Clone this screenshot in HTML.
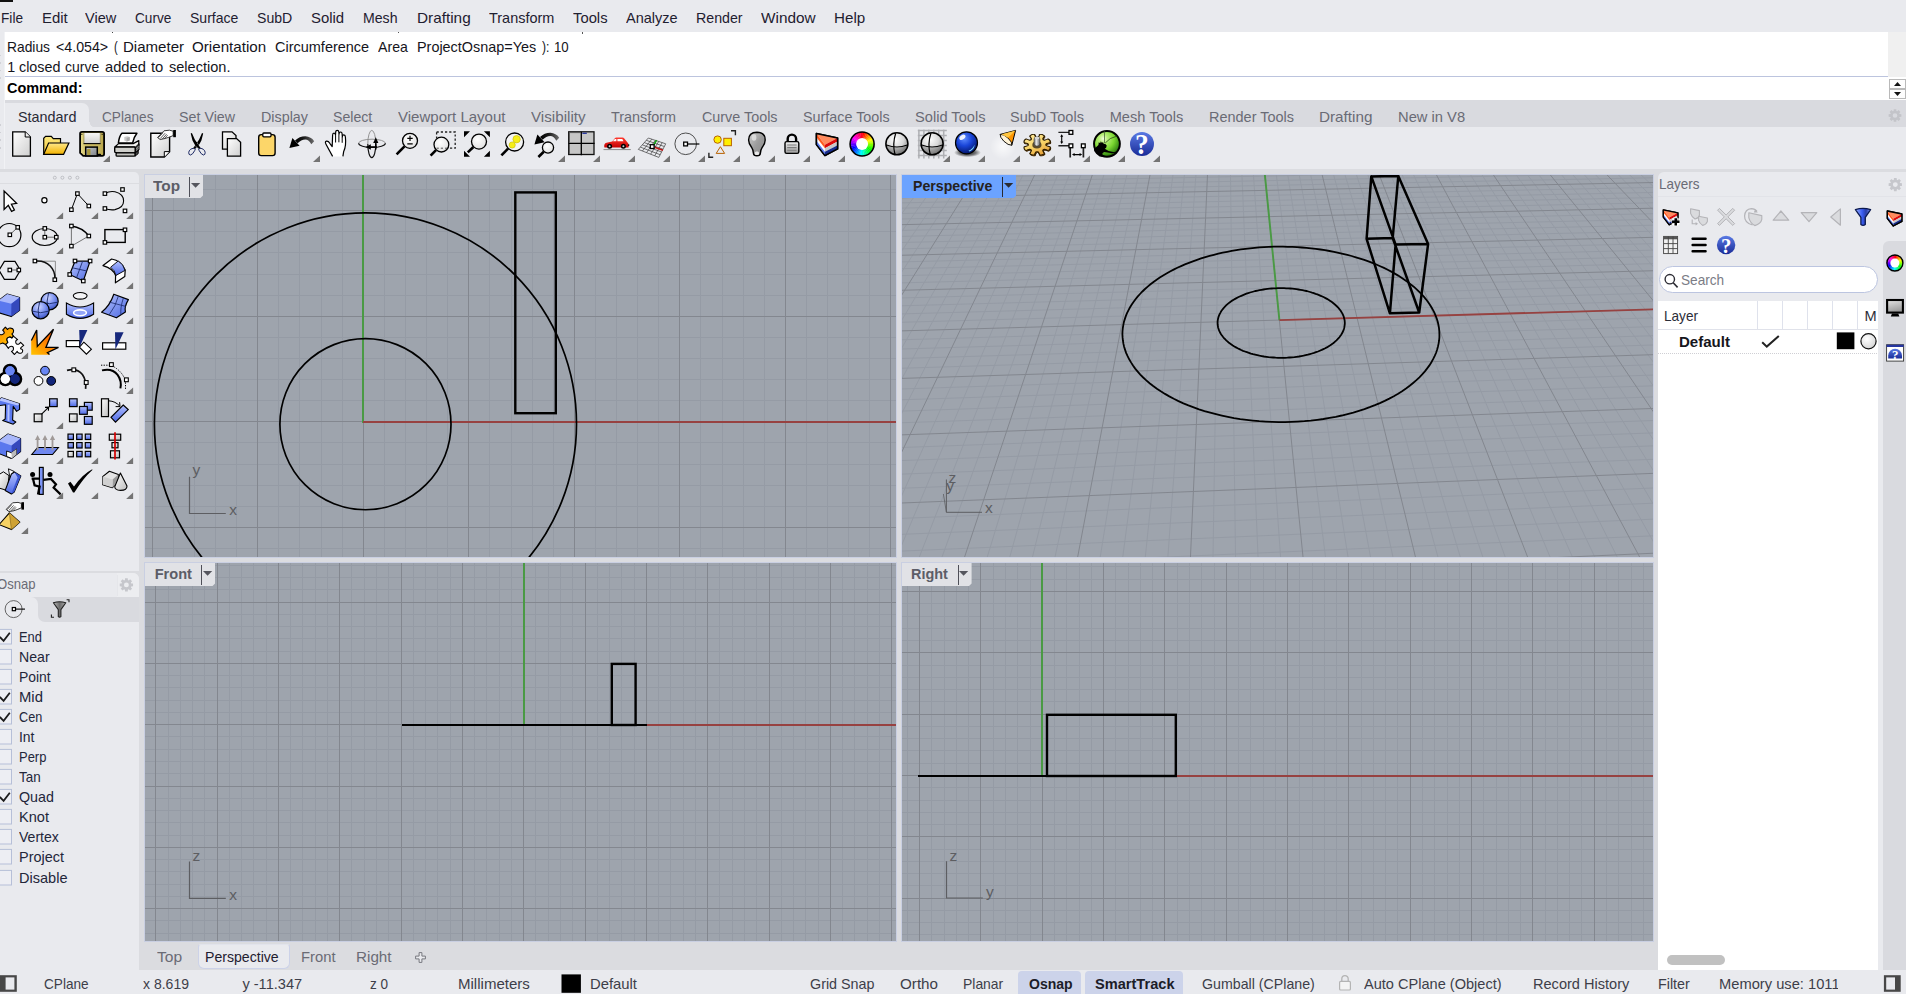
<!DOCTYPE html><html><head><meta charset="utf-8"><title>Rhino</title><style>

*{margin:0;padding:0;box-sizing:border-box}
html,body{width:1906px;height:994px;overflow:hidden;background:#e9eaee;font-family:"Liberation Sans",sans-serif}
body{position:relative}
.a{position:absolute}
.t{position:absolute;white-space:nowrap;transform-origin:0 0;line-height:1}
svg{position:absolute;overflow:visible}

</style></head><body>
<div class="a" style="left:0px;top:0px;width:13px;height:2px;background:#111;"></div>
<div class="t" style="left:0.80px;top:10.64px;font-size:14.6px;color:#1f2030;transform:scaleX(0.9362);">File</div>
<div class="t" style="left:41.50px;top:10.64px;font-size:14.6px;color:#1f2030;transform:scaleX(1.0229);">Edit</div>
<div class="t" style="left:85.40px;top:10.64px;font-size:14.6px;color:#1f2030;transform:scaleX(0.9968);">View</div>
<div class="t" style="left:135.20px;top:10.64px;font-size:14.6px;color:#1f2030;transform:scaleX(0.9333);">Curve</div>
<div class="t" style="left:190.30px;top:10.64px;font-size:14.6px;color:#1f2030;transform:scaleX(0.9628);">Surface</div>
<div class="t" style="left:257.30px;top:10.64px;font-size:14.6px;color:#1f2030;transform:scaleX(0.9671);">SubD</div>
<div class="t" style="left:311.30px;top:10.64px;font-size:14.6px;color:#1f2030;transform:scaleX(1.0215);">Solid</div>
<div class="t" style="left:363.30px;top:10.64px;font-size:14.6px;color:#1f2030;transform:scaleX(0.9678);">Mesh</div>
<div class="t" style="left:416.70px;top:10.64px;font-size:14.6px;color:#1f2030;transform:scaleX(1.0504);">Drafting</div>
<div class="t" style="left:489.30px;top:10.64px;font-size:14.6px;color:#1f2030;transform:scaleX(0.9909);">Transform</div>
<div class="t" style="left:573.20px;top:10.64px;font-size:14.6px;color:#1f2030;transform:scaleX(1.0139);">Tools</div>
<div class="t" style="left:626.20px;top:10.64px;font-size:14.6px;color:#1f2030;transform:scaleX(0.9942);">Analyze</div>
<div class="t" style="left:696.40px;top:10.64px;font-size:14.6px;color:#1f2030;transform:scaleX(0.9734);">Render</div>
<div class="t" style="left:761.20px;top:10.64px;font-size:14.6px;color:#1f2030;transform:scaleX(1.0519);">Window</div>
<div class="t" style="left:834.40px;top:10.64px;font-size:14.6px;color:#1f2030;transform:scaleX(1.0400);">Help</div>
<div class="a" style="left:5px;top:32px;width:1883px;height:44px;background:#fff;"></div>
<div class="a" style="left:5px;top:76px;width:1901px;height:1px;background:#bcc4de;"></div>
<div class="a" style="left:5px;top:77px;width:1901px;height:23px;background:#fff;"></div>
<div class="a" style="left:1888px;top:32px;width:18px;height:45px;background:#f0f0f0;"></div>
<div class="a" style="left:112.3px;top:32px;width:1.2px;height:1.4px;background:#444;"></div>
<div class="a" style="left:397.6px;top:32px;width:1.4px;height:1.2px;background:#555;"></div>
<div class="a" style="left:582.4px;top:32px;width:1px;height:1.6px;background:#555;"></div>
<div class="a" style="left:0px;top:54.6px;width:1.2px;height:1.6px;background:#d2d3d8;"></div>
<div class="a" style="left:0px;top:62.2px;width:1.2px;height:1.6px;background:#d2d3d8;"></div>
<div class="a" style="left:0px;top:69.8px;width:1.2px;height:1.6px;background:#d2d3d8;"></div>
<div class="a" style="left:0px;top:77.4px;width:1.2px;height:1.6px;background:#d2d3d8;"></div>
<div class="a" style="left:0px;top:124.2px;width:1.2px;height:1.6px;background:#cfd0d5;"></div>
<div class="a" style="left:0px;top:131.8px;width:1.2px;height:1.6px;background:#cfd0d5;"></div>
<div class="a" style="left:0px;top:139.4px;width:1.2px;height:1.6px;background:#cfd0d5;"></div>
<div class="a" style="left:0px;top:147.0px;width:1.2px;height:1.6px;background:#cfd0d5;"></div>
<div class="t" style="left:6.60px;top:39.70px;font-size:14.3px;color:#15151c;transform:scaleX(0.9663);">Radius</div>
<div class="t" style="left:55.70px;top:39.70px;font-size:14.3px;color:#15151c;transform:scaleX(0.9943);">&lt;4.054&gt;</div>
<div class="t" style="left:113.90px;top:39.70px;font-size:14.3px;color:#15151c;transform:scaleX(0.7789);">(</div>
<div class="t" style="left:122.50px;top:39.70px;font-size:14.3px;color:#15151c;transform:scaleX(1.0517);">Diameter</div>
<div class="t" style="left:192.30px;top:39.70px;font-size:14.3px;color:#15151c;transform:scaleX(1.0600);">Orientation</div>
<div class="t" style="left:275.20px;top:39.70px;font-size:14.3px;color:#15151c;transform:scaleX(1.0129);">Circumference</div>
<div class="t" style="left:378.40px;top:39.70px;font-size:14.3px;color:#15151c;transform:scaleX(0.9884);">Area</div>
<div class="t" style="left:417.40px;top:39.70px;font-size:14.3px;color:#15151c;transform:scaleX(1.0070);">ProjectOsnap=Yes</div>
<div class="t" style="left:542.30px;top:39.70px;font-size:14.3px;color:#15151c;transform:scaleX(0.8457);">):</div>
<div class="t" style="left:554.10px;top:39.70px;font-size:14.3px;color:#15151c;transform:scaleX(0.9260);">10</div>
<div class="t" style="left:7.20px;top:59.90px;font-size:14.3px;color:#15151c;">1</div>
<div class="t" style="left:18.60px;top:59.90px;font-size:14.3px;color:#15151c;transform:scaleX(1.0030);">closed</div>
<div class="t" style="left:65.30px;top:59.90px;font-size:14.3px;color:#15151c;transform:scaleX(0.9771);">curve</div>
<div class="t" style="left:104.70px;top:59.90px;font-size:14.3px;color:#15151c;transform:scaleX(1.0289);">added</div>
<div class="t" style="left:151.40px;top:59.90px;font-size:14.3px;color:#15151c;transform:scaleX(1.0358);">to</div>
<div class="t" style="left:169.20px;top:59.90px;font-size:14.3px;color:#15151c;transform:scaleX(1.0170);">selection.</div>
<div class="t" style="left:6.50px;top:80.80px;font-size:14.3px;color:#000;font-weight:bold;transform:scaleX(1.0104);">Command:</div>
<div class="a" style="left:1889px;top:79px;width:17px;height:10px;background:#fdfdfd;border:1px solid #b9b9b9"></div>
<div class="a" style="left:1889px;top:89px;width:17px;height:10px;background:#fdfdfd;border:1px solid #b9b9b9"></div>
<svg style="left:1889px;top:79px" width="17" height="20"><path d="M5 7 L8.5 3 L12 7Z M5 13 L8.5 17 L12 13Z" fill="#111"/></svg>
<div class="a" style="left:5px;top:100px;width:1901px;height:27px;background:#d9dadf;"></div>
<div class="a" style="left:5px;top:103px;width:84px;height:24px;background:#e9eaee;border-radius:0 7px 0 0"></div>
<div class="a" style="left:89px;top:121.5px;width:5.5px;height:5.5px;background:radial-gradient(circle at 100% 0,rgba(233,234,238,0) 5px,#e9eaee 5.6px)"></div>
<div class="t" style="left:17.90px;top:109.64px;font-size:14.6px;color:#2a2b36;transform:scaleX(0.9857);">Standard</div>
<div class="t" style="left:102.40px;top:109.64px;font-size:14.6px;color:#6a6b75;transform:scaleX(0.9324);">CPlanes</div>
<div class="t" style="left:179.30px;top:109.64px;font-size:14.6px;color:#6a6b75;transform:scaleX(0.9778);">Set View</div>
<div class="t" style="left:261.20px;top:109.64px;font-size:14.6px;color:#6a6b75;transform:scaleX(0.9813);">Display</div>
<div class="t" style="left:333.40px;top:109.64px;font-size:14.6px;color:#6a6b75;transform:scaleX(0.9674);">Select</div>
<div class="t" style="left:397.90px;top:109.64px;font-size:14.6px;color:#6a6b75;transform:scaleX(1.0299);">Viewport Layout</div>
<div class="t" style="left:530.90px;top:109.64px;font-size:14.6px;color:#6a6b75;transform:scaleX(1.0419);">Visibility</div>
<div class="t" style="left:611.10px;top:109.64px;font-size:14.6px;color:#6a6b75;transform:scaleX(0.9864);">Transform</div>
<div class="t" style="left:701.70px;top:109.64px;font-size:14.6px;color:#6a6b75;transform:scaleX(0.9834);">Curve Tools</div>
<div class="t" style="left:802.80px;top:109.64px;font-size:14.6px;color:#6a6b75;transform:scaleX(0.9824);">Surface Tools</div>
<div class="t" style="left:914.60px;top:109.64px;font-size:14.6px;color:#6a6b75;transform:scaleX(1.0032);">Solid Tools</div>
<div class="t" style="left:1010.30px;top:109.64px;font-size:14.6px;color:#6a6b75;transform:scaleX(0.9936);">SubD Tools</div>
<div class="t" style="left:1109.70px;top:109.64px;font-size:14.6px;color:#6a6b75;">Mesh Tools</div>
<div class="t" style="left:1208.50px;top:109.64px;font-size:14.6px;color:#6a6b75;transform:scaleX(0.9913);">Render Tools</div>
<div class="t" style="left:1318.60px;top:109.64px;font-size:14.6px;color:#6a6b75;transform:scaleX(1.0465);">Drafting</div>
<div class="t" style="left:1397.90px;top:109.64px;font-size:14.6px;color:#6a6b75;transform:scaleX(1.0090);">New in V8</div>
<svg style="left:0;top:0" width="1" height="1"><path d="M1901.37 114.21 L1901.37 116.79 L1899.60 116.92 L1899.25 117.74 L1900.42 119.09 L1898.59 120.92 L1897.24 119.75 L1896.42 120.10 L1896.29 121.87 L1893.71 121.87 L1893.58 120.10 L1892.76 119.75 L1891.41 120.92 L1889.58 119.09 L1890.75 117.74 L1890.40 116.92 L1888.63 116.79 L1888.63 114.21 L1890.40 114.08 L1890.75 113.26 L1889.58 111.91 L1891.41 110.08 L1892.76 111.25 L1893.58 110.90 L1893.71 109.13 L1896.29 109.13 L1896.42 110.90 L1897.24 111.25 L1898.59 110.08 L1900.42 111.91 L1899.25 113.26 L1899.60 114.08Z M1897.34 115.50 A2.34 2.34 0 1 0 1892.66 115.50 A2.34 2.34 0 1 0 1897.34 115.50Z" fill="#c3c4c9" fill-rule="evenodd"/></svg>
<div class="a" style="left:4px;top:32px;width:1px;height:137px;background:#f1f2f5;"></div>
<div class="a" style="left:0px;top:169px;width:1906px;height:801px;background:#dbdce0;"></div>
<svg style="left:0;top:0" width="1906" height="172">
<defs>
<linearGradient id="gFoldB" x1="0" y1="0" x2="0" y2="1"><stop offset="0" stop-color="#fdea80"/><stop offset="1" stop-color="#f2c434"/></linearGradient>
<linearGradient id="gPage" x1="0" y1="0" x2="1" y2="1"><stop offset="0" stop-color="#fff"/><stop offset="1" stop-color="#cfcfcf"/></linearGradient>
<linearGradient id="gFold" x1="0" y1="0" x2="0" y2="1"><stop offset="0" stop-color="#ffe98a"/><stop offset="1" stop-color="#f2b200"/></linearGradient>
<linearGradient id="gGrayV" x1="0" y1="0" x2="0" y2="1"><stop offset="0" stop-color="#f4f4f4"/><stop offset="1" stop-color="#9a9a9a"/></linearGradient>
<radialGradient id="gSph" cx="0.4" cy="0.3" r="0.8"><stop offset="0" stop-color="#fff"/><stop offset="0.5" stop-color="#d8d8d8"/><stop offset="1" stop-color="#777"/></radialGradient>
<radialGradient id="gBlue" cx="0.4" cy="0.3" r="0.75"><stop offset="0" stop-color="#5f8dff"/><stop offset="0.45" stop-color="#1a45d8"/><stop offset="1" stop-color="#00105e"/></radialGradient>
<radialGradient id="gGreen" cx="0.55" cy="0.45" r="0.7"><stop offset="0" stop-color="#b6f46a"/><stop offset="0.6" stop-color="#74c82e"/><stop offset="1" stop-color="#2c6a10"/></radialGradient>
<linearGradient id="gHelp" x1="0" y1="0" x2="0" y2="1"><stop offset="0" stop-color="#5a7ae4"/><stop offset="1" stop-color="#1a2c98"/></linearGradient>
<radialGradient id="gLens" cx="0.4" cy="0.35" r="0.8"><stop offset="0" stop-color="#fff"/><stop offset="1" stop-color="#dcdcdc"/></radialGradient>
<linearGradient id="gBulb" x1="0" y1="0" x2="1" y2="1"><stop offset="0" stop-color="#d0d0d0"/><stop offset="0.5" stop-color="#9c9c9c"/><stop offset="1" stop-color="#8a8a8a"/></linearGradient>
<linearGradient id="gArr" x1="0" y1="0" x2="1" y2="0"><stop offset="0" stop-color="#000"/><stop offset="0.45" stop-color="#1a1a1a"/><stop offset="1" stop-color="#6e6e6e"/></linearGradient>
<linearGradient id="gCar" x1="0" y1="0" x2="0" y2="1"><stop offset="0" stop-color="#ff3a30"/><stop offset="1" stop-color="#c40000"/></linearGradient>
<radialGradient id="gGlow" cx="0.5" cy="0.5" r="0.5"><stop offset="0" stop-color="#fff" stop-opacity="0.75"/><stop offset="1" stop-color="#fff" stop-opacity="0"/></radialGradient>
<radialGradient id="gShadow" cx="0.5" cy="0.5" r="0.5"><stop offset="0" stop-color="#000" stop-opacity="0.9"/><stop offset="0.6" stop-color="#000" stop-opacity="0.5"/><stop offset="1" stop-color="#000" stop-opacity="0"/></radialGradient>
<linearGradient id="gBlueSurf" x1="0" y1="0" x2="1" y2="1"><stop offset="0" stop-color="#b8c6ff"/><stop offset="1" stop-color="#4a66e0"/></linearGradient>
<linearGradient id="gBlueV" x1="0" y1="0" x2="0" y2="1"><stop offset="0" stop-color="#b4c2ff"/><stop offset="1" stop-color="#4c68e6"/></linearGradient>
<radialGradient id="gBlueSp" cx="0.4" cy="0.3" r="0.8"><stop offset="0" stop-color="#d0d8ff"/><stop offset="0.5" stop-color="#7a90f0"/><stop offset="1" stop-color="#2c44b8"/></radialGradient>
<linearGradient id="gOrange" x1="0" y1="1" x2="1" y2="0"><stop offset="0" stop-color="#ffc400"/><stop offset="0.45" stop-color="#ff8a00"/><stop offset="1" stop-color="#ff4000"/></linearGradient>
<linearGradient id="gWhiteG" x1="0" y1="0" x2="1" y2="1"><stop offset="0" stop-color="#fff"/><stop offset="1" stop-color="#bdbdbd"/></linearGradient>
</defs>
<path d="M103.0 161.9 H110.0 V155.4Z" fill="#747474"/>
<path d="M313.0 161.9 H320.0 V155.4Z" fill="#747474"/>
<path d="M558.0 161.9 H565.0 V155.4Z" fill="#747474"/>
<path d="M593.0 161.9 H600.0 V155.4Z" fill="#747474"/>
<path d="M628.0 161.9 H635.0 V155.4Z" fill="#747474"/>
<path d="M663.0 161.9 H670.0 V155.4Z" fill="#747474"/>
<path d="M698.0 161.9 H705.0 V155.4Z" fill="#747474"/>
<path d="M733.0 161.9 H740.0 V155.4Z" fill="#747474"/>
<path d="M768.0 161.9 H775.0 V155.4Z" fill="#747474"/>
<path d="M803.0 161.9 H810.0 V155.4Z" fill="#747474"/>
<path d="M838.0 161.9 H845.0 V155.4Z" fill="#747474"/>
<path d="M873.0 161.9 H880.0 V155.4Z" fill="#747474"/>
<path d="M943.0 161.9 H950.0 V155.4Z" fill="#747474"/>
<path d="M978.0 161.9 H985.0 V155.4Z" fill="#747474"/>
<path d="M1013.0 161.9 H1020.0 V155.4Z" fill="#747474"/>
<path d="M1048.0 161.9 H1055.0 V155.4Z" fill="#747474"/>
<path d="M1083.0 161.9 H1090.0 V155.4Z" fill="#747474"/>
<path d="M1118.0 161.9 H1125.0 V155.4Z" fill="#747474"/>
<path d="M1153.0 161.9 H1160.0 V155.4Z" fill="#747474"/>
<path d="M12.7 131.8 H25.2 L30.4 137 V156.1 H12.7Z" fill="url(#gPage)" stroke="#000" stroke-width="1.3"/><path d="M25.2 131.8 V137 H30.4" fill="#eee" stroke="#000" stroke-width="1"/>
<path d="M43.7 154.2 V138.2 L45.6 136.4 H51.3 L53.3 138.6 H60.5 V143" fill="url(#gFoldB)" stroke="#000" stroke-width="1.2"/><path d="M43.7 154.3 L48.6 143 H68.9 L63.6 154.3Z" fill="url(#gFold)" stroke="#000" stroke-width="1.2"/>
<defs><linearGradient id="gGold" x1="0" y1="0" x2="1" y2="0"><stop offset="0" stop-color="#e6da8c"/><stop offset="0.25" stop-color="#cdbd66"/><stop offset="0.8" stop-color="#c6b45c"/><stop offset="1" stop-color="#b4a248"/></linearGradient><linearGradient id="gLbl" x1="0" y1="0" x2="0" y2="1"><stop offset="0" stop-color="#f6f6f6"/><stop offset="1" stop-color="#cfcfcf"/></linearGradient><linearGradient id="gShut" x1="0" y1="0" x2="1" y2="1"><stop offset="0" stop-color="#c4c8cc"/><stop offset="1" stop-color="#7c8084"/></linearGradient></defs>
<path d="M82 131.9 H102.2 Q104.1 131.9 104.1 133.8 V154 Q104.1 155.9 102.2 155.9 H100.2 V154.6 H98.6 V155.9 H83.2 L80.1 152.9 V133.8 Q80.1 131.9 82 131.9Z" fill="url(#gGold)" stroke="#000" stroke-width="1.8" stroke-linejoin="round"/><rect x="83.7" y="133" width="16.8" height="10.6" fill="url(#gLbl)"/><path d="M83.5 143.6 H100.7" stroke="#000" stroke-width="1.1"/><path d="M83.9 133 V143.2 M100.3 133 V143.2" stroke="#8a7c30" stroke-width="0.7"/><path d="M81.2 134.3 h1.2 M101.6 134.3 h1.2" stroke="#000" stroke-width="0.9"/><rect x="85.7" y="147.1" width="11.6" height="8.8" fill="url(#gShut)" stroke="#000" stroke-width="1.5"/><rect x="87.1" y="149" width="3.4" height="6" fill="#a6963a"/>
<path d="M118.4 143 Q119.2 136 121.9 133.2 H136.9 Q133.8 137 132.6 143Z" fill="#fff" stroke="#000" stroke-width="1.5" stroke-linejoin="round"/><path d="M124.3 137 L127.4 136.2 L129.7 137 V140.6 L126.6 141.5 L124.3 140.6Z" fill="#c9c9c9"/><path d="M126.6 137.9 L129.7 137 V140.6 L126.6 141.5Z" fill="#a8a8a8"/><path d="M114.8 147 L118.6 143.6 H133.2 L138.8 140.6 V145.4 L135.2 148.4 V147Z" fill="#f2f2f0" stroke="#000" stroke-width="1.2" stroke-linejoin="round"/><path d="M135.2 147.4 L139 143.6 V150 L135.2 152.8Z" fill="#4a4a4a" stroke="#000" stroke-width="1"/><path d="M135.6 149.4 L138.8 146.4 M135.6 151 L138.8 148" stroke="#bbb" stroke-width="0.6"/><rect x="114.7" y="147" width="20.5" height="5.6" rx="1" fill="#cfcfcb" stroke="#000" stroke-width="1.4"/><path d="M135 153.2 L138.2 150.6 V153.6 L135 156.2Z" fill="#4a4a4a" stroke="#000" stroke-width="1"/><rect x="116.1" y="152.8" width="18.9" height="3.4" rx="1" fill="#c2c2be" stroke="#000" stroke-width="1.3"/>
<path d="M150.8 133.3 H169.6 V151.6 L164.3 157 H150.8Z" fill="url(#gPage)" stroke="#000" stroke-width="1.4"/><path d="M164.3 157 V151.6 H169.6" fill="#fff" stroke="#000" stroke-width="1"/><path d="M157.5 137.5 L164 130.8 L169.5 130.2 L173.2 131.2 V135.6 L168.8 137.3 L165 138.5 L160.2 139.5Z" fill="#fff" stroke="#222" stroke-width="0.9"/><path d="M158.3 137.8 L163.2 132.6 M160.2 138.6 L165.1 133.2 M162.3 138.9 L166.6 134.2 M164.3 138.7 L167.6 135.2" stroke="#333" stroke-width="0.8"/><rect x="173.2" y="130" width="2.7" height="7.2" fill="#000"/>
<path d="M190.70 133.50 L191.90 133.00 L194.80 139.40 L198.50 145.00 L200.60 148.00 L199.60 148.90 L195.50 145.90 L192.50 140.40Z M203.20 133.50 L202.00 133.00 L199.10 139.40 L195.40 145.00 L193.30 148.00 L194.30 148.90 L198.40 145.90 L201.40 140.40ZM196.95 141.8 L199 145.4 L196.95 148 L194.9 145.4Z" fill="#000"/><path d="M199.8 148.2 Q204.6 148.6 205.2 152.6 Q205.2 155 203.4 155 Q201.2 154.6 199.2 150.6 L198.4 148.4" fill="none" stroke="#0e1a58" stroke-width="0.95"/><path d="M194.1 148.2 Q189.3 148.6 188.7 152.6 Q188.7 155 190.5 155 Q192.7 154.6 194.7 150.6 L195.5 148.4" fill="none" stroke="#0e1a58" stroke-width="0.95"/>
<path d="M222.5 131.8 H232 L236 135.6 V149.2 H222.5Z" fill="url(#gPage)" stroke="#000" stroke-width="1.3"/><path d="M227.4 138.6 H236.6 L240.6 142.4 V156.1 H227.4Z" fill="url(#gPage)" stroke="#000" stroke-width="1.3"/>
<rect x="258.7" y="134.6" width="16.4" height="21" rx="2.6" fill="#fcd669" stroke="#000" stroke-width="1.4"/><rect x="262.8" y="133" width="8.2" height="3.8" rx="1" fill="#fff" stroke="#000" stroke-width="1.3"/>
<path d="M295.0 140.6 Q299.6 136.2 305.5 136.3 Q311.0 136.6 314.2 141.2 L311.3 144.2 Q309.0 139.6 305.3 139.4 Q301.2 139.4 297.6 143.2Z" fill="url(#gArr)"/><path d="M289.4 147.9 L292.4 138.0 L299.6 145.7Z" fill="#000"/>
<path d="M332.6 156.4 L326 144.3 Q324.6 141.6 326.5 141.2 Q328.3 140.9 329.8 143.3 L332.2 146.6 L332.6 135.2 Q332.6 133.2 334 133.2 Q335.4 133.2 335.5 135.2 L335.7 131.9 Q335.8 130.3 337.2 130.3 Q338.7 130.3 338.8 131.9 L339 134.2 Q339.1 132 340.6 132 Q342 132 342.1 133.8 L342.3 136.8 Q342.6 134.8 343.9 134.9 Q345.3 135 345.4 137 Q346.4 146 343.7 151.4 L342.9 156.4" fill="#fff" stroke="#000" stroke-width="1.2" stroke-linejoin="round"/><path d="M335.6 135.4 V142.5 M338.9 134.5 V142.3 M342.2 137 V142.8" stroke="#000" stroke-width="1"/>
<path d="M358.6 143.3 A13.4 4.1 0 0 1 385.4 143.3" fill="none" stroke="#8a8a8a" stroke-width="0.9"/><path d="M385.4 143.3 A13.4 4.1 0 0 1 358.6 143.3" fill="none" stroke="#111" stroke-width="1.2"/><path d="M367.8 144 A4 13.6 0 0 1 375.8 144" fill="none" stroke="#8a8a8a" stroke-width="0.9"/><path d="M375.8 144 A4 13.6 0 0 1 367.8 144" fill="none" stroke="#111" stroke-width="1.2"/><path d="M375.8 149.4 V141.5" stroke="#000" stroke-width="1.5"/><path d="M373.2 142.9 L375.8 137.2 L378.4 142.9Z" fill="#000"/><path d="M377 147 H369.5" stroke="#000" stroke-width="1.5"/><path d="M370.8 144.3 L365.5 147 L370.8 149.7Z" fill="#000"/>
<line x1="404.53" y1="146.36" x2="396.60" y2="154.40" stroke="#000" stroke-width="2.6"/><circle cx="410" cy="140.8" r="7.5" fill="url(#gLens)" stroke="#000" stroke-width="1.3"/>
<path d="M407.3 138.3 H412.7 M410 135.7 V140.9 M407.3 143.8 H412.7" stroke="#000" stroke-width="1.2"/>
<rect x="436.6" y="132" width="18.6" height="16.2" fill="none" stroke="#222" stroke-width="1.3" stroke-dasharray="2.2 2"/>
<line x1="436.01" y1="150.09" x2="430.60" y2="155.60" stroke="#000" stroke-width="2.6"/><circle cx="441.4" cy="144.6" r="7.4" fill="url(#gLens)" stroke="#000" stroke-width="1.3"/>
<path d="M436.6 148.2 H447.5" stroke="#555" stroke-width="1" stroke-dasharray="2.2 2"/>
<path d="M464 131.2 H470 L464 137.2Z M489.9 131.2 V137.2 L483.9 131.2Z M464 156.7 V150.7 L470 156.7Z M489.9 156.7 H483.9 L489.9 150.7Z" fill="#000"/>
<line x1="473.39" y1="147.01" x2="467.80" y2="152.40" stroke="#000" stroke-width="2.6"/><circle cx="479" cy="141.6" r="7.5" fill="url(#gLens)" stroke="#000" stroke-width="1.3"/>
<line x1="508.07" y1="148.63" x2="501.40" y2="155.40" stroke="#000" stroke-width="2.6"/><circle cx="514.6" cy="142" r="9" fill="#f4f4f4" stroke="#000" stroke-width="1.3"/>
<circle cx="516.6" cy="139.2" r="3.7" fill="#f6ee18" stroke="#c8be00" stroke-width="0.6"/><circle cx="512.2" cy="145" r="3.1" fill="#f6ee18" stroke="#c8be00" stroke-width="0.6"/>
<path d="M540.0 137.1 Q544.6 132.7 550.5 132.8 Q556.0 133.1 559.2 137.7 L556.3 140.7 Q554.0 136.1 550.3 135.9 Q546.2 135.9 542.6 139.7Z" fill="url(#gArr)"/><path d="M534.4 144.4 L537.4 134.5 L544.6 142.2Z" fill="#000"/>
<line x1="543.78" y1="151.73" x2="538.40" y2="157.00" stroke="#000" stroke-width="2.6"/><circle cx="548" cy="147.6" r="5.6" fill="url(#gLens)" stroke="#000" stroke-width="1.3"/>
<rect x="568.7" y="131.8" width="25.3" height="22.7" fill="#c6c6c6" stroke="#111" stroke-width="1.3"/><path d="M581.3 131.8 V155.2 M568.7 143.3 H594.6" stroke="#000" stroke-width="1.3"/><path d="M569.4 132.6 H580.6 M569.4 132.6 V142.6 M569.4 144.1 V153.8" stroke="#555" stroke-width="0.9"/><rect x="582.4" y="132.7" width="4.4" height="1.2" fill="#1c2c9c"/>
<path d="M603.5 149.6 H630.8" stroke="#8d8d8d" stroke-width="1"/><path d="M604.3 147 Q603.7 143.6 606.5 142.8 L612.3 141.4 L614.8 138.3 Q615.3 137.6 616.3 137.6 H622.6 Q623.6 137.6 624.3 138.4 L627.3 142.3 Q628.6 143.3 628.6 145.2 V147 Q628.6 147.6 628 147.6 H605 Q604.3 147.6 604.3 147Z" fill="url(#gCar)"/><path d="M612.8 141.2 L614.9 139 H616.4 V141.2Z M617.4 139 H622.3 L623.5 141.2 H617.4Z" fill="#fff"/><circle cx="609.6" cy="146.3" r="2.5" fill="#000"/><circle cx="609.6" cy="146.3" r="1" fill="#ccc"/><circle cx="623.4" cy="146.3" r="2.5" fill="#000"/><circle cx="623.4" cy="146.3" r="1" fill="#ccc"/><path d="M628.2 144.2 h1 v1.8 h-1z" fill="#000"/>
<path d="M648.3 138.0 L638.3 149.4 M648.3 138.0 L665.7 143.8 M651.8 139.2 L642.4 151.0 M646.3 140.3 L664.3 146.5 M655.3 140.3 L646.5 152.6 M644.3 142.6 L662.9 149.2 M658.7 141.5 L650.6 154.2 M642.3 144.8 L661.6 152.0 M662.2 142.6 L654.7 155.8 M640.3 147.1 L660.2 154.7 M665.7 143.8 L658.8 157.4 M638.3 149.4 L658.8 157.4 " stroke="#3c3c3c" stroke-width="0.7" fill="none"/>
<path d="M653.6 145.2 L656.6 140.2" stroke="#12a012" stroke-width="1.6"/><path d="M654.6 147.2 L663 150.2" stroke="#c01818" stroke-width="1.6"/><rect x="650.30" y="144.70" width="3.8" height="3.8" fill="#fff" stroke="#000" stroke-width="1.3"/>
<circle cx="685.7" cy="143.8" r="10.8" fill="none" stroke="#3c3c3c" stroke-width="0.9"/><path d="M688 144 H699.4" stroke="#000" stroke-width="1.2"/><rect x="683.70" y="142.10" width="3.8" height="3.8" fill="#fff" stroke="#000" stroke-width="1.3"/>
<circle cx="717.6" cy="139.6" r="3.7" fill="#ffef00" stroke="#b86200" stroke-width="1"/><rect x="723.8" y="138.3" width="7.6" height="7.4" fill="#ffef00" stroke="#b86200" stroke-width="1"/><path d="M716.2 153.4 L720.4 146.7 L724.6 153.4Z" fill="none" stroke="#b86200" stroke-width="1"/><path d="M731 130.7 H735.4 V135.2 M708.9 152.8 V157.2 H713.2" fill="none" stroke="#222" stroke-width="1.4"/>
<path d="M756.9 132.2 Q765.2 132.4 765.2 140 Q765.2 143.5 762.3 147.2 Q760.6 149.8 760.4 153.2 Q760.2 155.8 756.9 155.8 Q753.6 155.8 753.4 153.2 Q753.2 149.8 751.5 147.2 Q748.6 143.5 748.6 140 Q748.6 132.4 756.9 132.2Z" fill="url(#gBulb)" stroke="#000" stroke-width="1.4"/><ellipse cx="754" cy="137.5" rx="2.4" ry="3.2" fill="#e4e4e4" opacity="0.8"/><rect x="754.8" y="151.5" width="4.2" height="3.4" rx="1.5" fill="#e8e8e8"/>
<path d="M787.7 142 V138.8 A4.2 4.2 0 0 1 796.1 138.8 V142" fill="none" stroke="#000" stroke-width="2.4"/><rect x="785" y="141.6" width="13.8" height="11.8" rx="1.6" fill="url(#gGrayV)" stroke="#000" stroke-width="1.4"/><path d="M787.2 145 H796.6 M787.2 147.6 H796.6 M787.2 150.2 H796.6" stroke="#7c7c7c" stroke-width="1.1"/>
<path d="M816.4 133.6 L837.6 138 L837.6 148.9 L824.9 155.6 L816.4 144.6Z" fill="#fff" stroke="#000" stroke-width="1.5" stroke-linejoin="round"/><path d="M816.4 133.6 L837.6 138 L824.9 144.8Z" fill="#ff8b5e"/><path d="M816.4 133.6 L824.9 144.8 V148.2 L816.4 137.2Z" fill="#ff5a1e"/><path d="M824.9 144.8 L837.6 138 V141.6 L824.9 148.2Z" fill="#dc0a0a"/><path d="M824.9 148.2 L837.6 141.6 V145.2 L824.9 151.8Z" fill="#c8c8c8"/><path d="M816.4 140.8 L824.9 151.8 V155.6 L816.4 144.6Z" fill="#5a7af0"/><path d="M824.9 151.8 L837.6 145.2 V148.9 L824.9 155.6Z" fill="#182c8c"/><path d="M816.4 133.6 L837.6 138 L837.6 148.9 L824.9 155.6 L816.4 144.6Z" fill="none" stroke="#000" stroke-width="1.5" stroke-linejoin="round"/>
<path d="M862.1 144 L862.10 132.00 A12.0 12.0 0 0 1 864.49 132.24Z" fill="hsl(0,100%,50%)"/><path d="M862.1 144 L864.18 132.18 A12.0 12.0 0 0 1 866.50 132.83Z" fill="hsl(10,100%,50%)"/><path d="M862.1 144 L866.20 132.72 A12.0 12.0 0 0 1 868.37 133.77Z" fill="hsl(20,100%,50%)"/><path d="M862.1 144 L868.10 133.61 A12.0 12.0 0 0 1 870.05 135.01Z" fill="hsl(30,100%,50%)"/><path d="M862.1 144 L869.81 134.81 A12.0 12.0 0 0 1 871.49 136.53Z" fill="hsl(40,100%,50%)"/><path d="M862.1 144 L871.29 136.29 A12.0 12.0 0 0 1 872.65 138.27Z" fill="hsl(50,100%,50%)"/><path d="M862.1 144 L872.49 138.00 A12.0 12.0 0 0 1 873.48 140.19Z" fill="hsl(60,100%,50%)"/><path d="M862.1 144 L873.38 139.90 A12.0 12.0 0 0 1 873.97 142.23Z" fill="hsl(70,100%,50%)"/><path d="M862.1 144 L873.92 141.92 A12.0 12.0 0 0 1 874.10 144.31Z" fill="hsl(80,100%,50%)"/><path d="M862.1 144 L874.10 144.00 A12.0 12.0 0 0 1 873.86 146.39Z" fill="hsl(90,100%,50%)"/><path d="M862.1 144 L873.92 146.08 A12.0 12.0 0 0 1 873.27 148.40Z" fill="hsl(100,100%,50%)"/><path d="M862.1 144 L873.38 148.10 A12.0 12.0 0 0 1 872.33 150.27Z" fill="hsl(110,100%,50%)"/><path d="M862.1 144 L872.49 150.00 A12.0 12.0 0 0 1 871.09 151.95Z" fill="hsl(120,100%,50%)"/><path d="M862.1 144 L871.29 151.71 A12.0 12.0 0 0 1 869.57 153.39Z" fill="hsl(130,100%,50%)"/><path d="M862.1 144 L869.81 153.19 A12.0 12.0 0 0 1 867.83 154.55Z" fill="hsl(140,100%,50%)"/><path d="M862.1 144 L868.10 154.39 A12.0 12.0 0 0 1 865.91 155.38Z" fill="hsl(150,100%,50%)"/><path d="M862.1 144 L866.20 155.28 A12.0 12.0 0 0 1 863.87 155.87Z" fill="hsl(160,100%,50%)"/><path d="M862.1 144 L864.18 155.82 A12.0 12.0 0 0 1 861.79 156.00Z" fill="hsl(170,100%,50%)"/><path d="M862.1 144 L862.10 156.00 A12.0 12.0 0 0 1 859.71 155.76Z" fill="hsl(180,100%,50%)"/><path d="M862.1 144 L860.02 155.82 A12.0 12.0 0 0 1 857.70 155.17Z" fill="hsl(190,100%,50%)"/><path d="M862.1 144 L858.00 155.28 A12.0 12.0 0 0 1 855.83 154.23Z" fill="hsl(200,100%,50%)"/><path d="M862.1 144 L856.10 154.39 A12.0 12.0 0 0 1 854.15 152.99Z" fill="hsl(210,100%,50%)"/><path d="M862.1 144 L854.39 153.19 A12.0 12.0 0 0 1 852.71 151.47Z" fill="hsl(220,100%,50%)"/><path d="M862.1 144 L852.91 151.71 A12.0 12.0 0 0 1 851.55 149.73Z" fill="hsl(230,100%,50%)"/><path d="M862.1 144 L851.71 150.00 A12.0 12.0 0 0 1 850.72 147.81Z" fill="hsl(240,100%,50%)"/><path d="M862.1 144 L850.82 148.10 A12.0 12.0 0 0 1 850.23 145.77Z" fill="hsl(250,100%,50%)"/><path d="M862.1 144 L850.28 146.08 A12.0 12.0 0 0 1 850.10 143.69Z" fill="hsl(260,100%,50%)"/><path d="M862.1 144 L850.10 144.00 A12.0 12.0 0 0 1 850.34 141.61Z" fill="hsl(270,100%,50%)"/><path d="M862.1 144 L850.28 141.92 A12.0 12.0 0 0 1 850.93 139.60Z" fill="hsl(280,100%,50%)"/><path d="M862.1 144 L850.82 139.90 A12.0 12.0 0 0 1 851.87 137.73Z" fill="hsl(290,100%,50%)"/><path d="M862.1 144 L851.71 138.00 A12.0 12.0 0 0 1 853.11 136.05Z" fill="hsl(300,100%,50%)"/><path d="M862.1 144 L852.91 136.29 A12.0 12.0 0 0 1 854.63 134.61Z" fill="hsl(310,100%,50%)"/><path d="M862.1 144 L854.39 134.81 A12.0 12.0 0 0 1 856.37 133.45Z" fill="hsl(320,100%,50%)"/><path d="M862.1 144 L856.10 133.61 A12.0 12.0 0 0 1 858.29 132.62Z" fill="hsl(330,100%,50%)"/><path d="M862.1 144 L858.00 132.72 A12.0 12.0 0 0 1 860.33 132.13Z" fill="hsl(340,100%,50%)"/><path d="M862.1 144 L860.02 132.18 A12.0 12.0 0 0 1 862.41 132.00Z" fill="hsl(350,100%,50%)"/><circle cx="862.1" cy="144" r="6.0" fill="#fff"/><circle cx="862.1" cy="144" r="12.0" fill="none" stroke="#000" stroke-width="1.6"/>
<circle cx="896.9" cy="143.8" r="11" fill="url(#gSph)" stroke="#000" stroke-width="1.6"/><path d="M886.5 145.0 Q896.9 149.0 907.3 145.0" fill="none" stroke="#000" stroke-width="1.2"/><path d="M895.7 133.2 Q892.3 143.8 894.9 154.2" fill="none" stroke="#000" stroke-width="1.2"/><path d="M886.8 145.4 Q896.9 149.4 907.0 145.4 A10.2 10.2 0 0 1 886.8 145.4Z" fill="#000" opacity="0.18"/>
<path d="M918.9 129.4 V158.4 M917.8 130.6 H946.8 M923.9 129.4 V158.4 M917.8 135.6 H946.8 M928.8 129.4 V158.4 M917.8 140.5 H946.8 M933.8 129.4 V158.4 M917.8 145.5 H946.8 M938.7 129.4 V158.4 M917.8 150.4 H946.8 M943.7 129.4 V158.4 M917.8 155.4 H946.8 " stroke="#aeafb3" stroke-width="1.5" fill="none"/>
<circle cx="932.1" cy="143.8" r="11" fill="url(#gSph)" stroke="#000" stroke-width="1.6"/><path d="M921.7 145.0 Q932.1 149.0 942.5 145.0" fill="none" stroke="#000" stroke-width="1.2"/><path d="M930.9 133.2 Q927.5 143.8 930.1 154.2" fill="none" stroke="#000" stroke-width="1.2"/><path d="M922.0 145.4 Q932.1 149.4 942.2 145.4 A10.2 10.2 0 0 1 922.0 145.4Z" fill="#000" opacity="0.18"/>
<ellipse cx="967.5" cy="152.6" rx="13.5" ry="4.6" fill="url(#gShadow)"/><circle cx="966.5" cy="142.8" r="11" fill="url(#gBlue)" stroke="#000" stroke-width="1.2"/><ellipse cx="962.4" cy="137.3" rx="3.4" ry="2.2" transform="rotate(-35 962.4 137.3)" fill="#fff" opacity="0.9"/><path d="M968.5 150.8 Q973 148.8 974.6 144.5 Q974.4 149.6 969.5 151.4Z" fill="#7fe0ff"/>
<circle cx="1003" cy="146.5" r="13" fill="url(#gGlow)"/><path d="M1015.6 130.4 L1000.2 134.4 Q1003 142 1011.8 145.2Z" fill="#ff9500" stroke="#000" stroke-width="1"/><path d="M1000.2 134.4 Q1003.4 133.8 1008.2 138.2 Q1012.6 142.6 1011.8 145.2 Q1008.4 145.6 1003.8 141.2 Q999.6 136.8 1000.2 134.4Z" fill="#fff3d6" stroke="#000" stroke-width="0.9"/><path d="M1015.6 130.4 L1001.5 134.3 L1008 137.8Z" fill="#ffc640"/>
<defs><linearGradient id="gGear" x1="0" y1="0" x2="0.6" y2="1"><stop offset="0" stop-color="#fdeaa0"/><stop offset="0.6" stop-color="#f8d468"/><stop offset="1" stop-color="#e8a43c"/></linearGradient></defs><path d="M8.34 1.03 L10.70 2.09 Q12.41 1.53 11.64 4.82 Q9.85 7.69 9.04 6.09 L6.62 5.17 Q5.35 5.35 5.17 6.62 L6.09 9.04 Q7.69 9.85 4.82 11.64 Q1.53 12.41 2.09 10.70 L1.03 8.34 Q0.00 7.56 -1.03 8.34 L-2.09 10.70 Q-1.53 12.41 -4.82 11.64 Q-7.69 9.85 -6.09 9.04 L-5.17 6.62 Q-5.35 5.35 -6.62 5.17 L-9.04 6.09 Q-9.85 7.69 -11.64 4.82 Q-12.41 1.53 -10.70 2.09 L-8.34 1.03 Q-7.56 0.00 -8.34 -1.03 L-10.70 -2.09 Q-12.41 -1.53 -11.64 -4.82 Q-9.85 -7.69 -9.04 -6.09 L-6.62 -5.17 Q-5.35 -5.35 -5.17 -6.62 L-6.09 -9.04 Q-7.69 -9.85 -4.82 -11.64 Q-1.53 -12.41 -2.09 -10.70 L-1.03 -8.34 Q-0.00 -7.56 1.03 -8.34 L2.09 -10.70 Q1.53 -12.41 4.82 -11.64 Q7.69 -9.85 6.09 -9.04 L5.17 -6.62 Q5.35 -5.35 6.62 -5.17 L9.04 -6.09 Q9.85 -7.69 11.64 -4.82 Q12.41 -1.53 10.70 -2.09 L8.34 -1.03 Q7.56 -0.00 8.34 1.03 Z" transform="translate(1037.6 145.5) scale(1.1 0.87)" fill="#b8640e" stroke="#3a2400" stroke-width="1"/><path d="M8.34 1.03 L10.70 2.09 Q12.41 1.53 11.64 4.82 Q9.85 7.69 9.04 6.09 L6.62 5.17 Q5.35 5.35 5.17 6.62 L6.09 9.04 Q7.69 9.85 4.82 11.64 Q1.53 12.41 2.09 10.70 L1.03 8.34 Q0.00 7.56 -1.03 8.34 L-2.09 10.70 Q-1.53 12.41 -4.82 11.64 Q-7.69 9.85 -6.09 9.04 L-5.17 6.62 Q-5.35 5.35 -6.62 5.17 L-9.04 6.09 Q-9.85 7.69 -11.64 4.82 Q-12.41 1.53 -10.70 2.09 L-8.34 1.03 Q-7.56 0.00 -8.34 -1.03 L-10.70 -2.09 Q-12.41 -1.53 -11.64 -4.82 Q-9.85 -7.69 -9.04 -6.09 L-6.62 -5.17 Q-5.35 -5.35 -5.17 -6.62 L-6.09 -9.04 Q-7.69 -9.85 -4.82 -11.64 Q-1.53 -12.41 -2.09 -10.70 L-1.03 -8.34 Q-0.00 -7.56 1.03 -8.34 L2.09 -10.70 Q1.53 -12.41 4.82 -11.64 Q7.69 -9.85 6.09 -9.04 L5.17 -6.62 Q5.35 -5.35 6.62 -5.17 L9.04 -6.09 Q9.85 -7.69 11.64 -4.82 Q12.41 -1.53 10.70 -2.09 L8.34 -1.03 Q7.56 -0.00 8.34 1.03 Z" transform="translate(1037.1 144.70000000000002) scale(1.1 0.87)" fill="url(#gGear)" stroke="#2a1c00" stroke-width="1.1" stroke-linejoin="round"/><ellipse cx="1036.8999999999999" cy="145.0" rx="4.6" ry="3.4" fill="#5a4a2a"/><rect x="1034.1" y="136.8" width="5.8" height="9.2" rx="2.5" fill="url(#gCyl)" stroke="#444" stroke-width="0.7"/><defs><linearGradient id="gCyl" x1="0" y1="0" x2="1" y2="0"><stop offset="0" stop-color="#777"/><stop offset="0.4" stop-color="#e4e4e4"/><stop offset="1" stop-color="#6a6a6a"/></linearGradient></defs><ellipse cx="1037.0" cy="138.0" rx="2.4" ry="1.2" fill="#d6d6d6"/>
<path d="M1058.4 132.4 H1069 M1058.4 145.8 H1069" stroke="#222" stroke-width="1.4"/><path d="M1070.2 148 V157.6 M1083.4 148 V157.6" stroke="#222" stroke-width="1.7"/><rect x="1069.00" y="130.50" width="3.8" height="3.8" fill="#fff" stroke="#000" stroke-width="1.3"/><rect x="1069.00" y="143.90" width="3.8" height="3.8" fill="#fff" stroke="#000" stroke-width="1.3"/><rect x="1081.40" y="143.90" width="3.8" height="3.8" fill="#fff" stroke="#000" stroke-width="1.3"/><path d="M1061.7 135.8 V142.4 M1073.5 154.6 H1080.6" stroke="#000" stroke-width="1.1"/><path d="M1060.2 136.8 L1061.7 134.2 L1063.2 136.8Z M1060.2 141.4 L1061.7 144 L1063.2 141.4Z M1074.6 153.1 L1072 154.6 L1074.6 156.1Z M1079.6 153.1 L1082.2 154.6 L1079.6 156.1Z" fill="#000"/>
<defs><radialGradient id="gGH" cx="0.36" cy="0.3" r="0.75"><stop offset="0" stop-color="#f4fce0"/><stop offset="0.22" stop-color="#b8ee78"/><stop offset="0.55" stop-color="#7cd832"/><stop offset="0.85" stop-color="#3e9416"/><stop offset="1" stop-color="#1c4c08"/></radialGradient></defs><circle cx="1106.95" cy="143.85" r="12.9" fill="url(#gGH)" stroke="#000" stroke-width="2"/><path d="M1104.5 131.4 V143" stroke="#4a6a3a" stroke-width="0.8"/><path d="M1105.2 143 Q1109.6 137.6 1116.6 136.2" stroke="#2c4a1c" stroke-width="0.8" fill="none"/><path d="M1094.4 147.6 Q1096.6 157 1106.4 156.6 Q1100.6 154.6 1100 151.6Z" fill="#000"/><path d="M1093.92 149.23 L1098.45 144.98 L1098.74 142.15 L1100.15 143.28 L1100.83 141.18 L1101.97 143.00 L1102.99 142.03 L1103.67 143.68 L1105.37 143.90 L1106.73 145.60 L1106.16 147.87 L1104.80 148.78 L1108.65 150.93 L1114.32 152.35 L1115.56 151.50 L1116.13 152.63 L1112.05 153.31 L1107.52 152.46 L1104.12 151.89 L1102.53 153.20 L1101.97 155.69 L1104.69 157.05 L1099.59 156.59 L1096.19 153.76 L1094.20 150.93Z" fill="#000"/>
<circle cx="1142" cy="143.9" r="12" fill="url(#gHelp)"/>
</svg>
<div class="t" style="left:1134.9px;top:130.1px;font-family:'Liberation Serif',serif;font-weight:bold;font-size:29.5px;color:#fff;transform:scaleX(0.93)">?</div>
<div class="a" style="left:0px;top:172px;width:139.3px;height:399px;background:#e9eaee;border-radius:0 5px 0 0"></div>
<div class="a" style="left:0px;top:183px;width:139.3px;height:1px;background:#dcdde1;"></div>
<svg style="left:0;top:0" width="145" height="560">
<circle cx="54.8" cy="177.7" r="1.5" fill="none" stroke="#b4b5ba" stroke-width="0.8"/>
<circle cx="62.4" cy="177.7" r="1.5" fill="none" stroke="#b4b5ba" stroke-width="0.8"/>
<circle cx="69.9" cy="177.7" r="1.5" fill="none" stroke="#b4b5ba" stroke-width="0.8"/>
<circle cx="77.4" cy="177.7" r="1.5" fill="none" stroke="#b4b5ba" stroke-width="0.8"/>
<path d="M56.1 219.0 H63.1 V212.4Z" fill="#747474"/>
<path d="M91.1 219.0 H98.1 V212.4Z" fill="#747474"/>
<path d="M126.1 219.0 H133.1 V212.4Z" fill="#747474"/>
<path d="M21.1 254.0 H28.1 V247.4Z" fill="#747474"/>
<path d="M56.1 254.0 H63.1 V247.4Z" fill="#747474"/>
<path d="M91.1 254.0 H98.1 V247.4Z" fill="#747474"/>
<path d="M126.1 254.0 H133.1 V247.4Z" fill="#747474"/>
<path d="M21.1 289.0 H28.1 V282.4Z" fill="#747474"/>
<path d="M56.1 289.0 H63.1 V282.4Z" fill="#747474"/>
<path d="M91.1 289.0 H98.1 V282.4Z" fill="#747474"/>
<path d="M126.1 289.0 H133.1 V282.4Z" fill="#747474"/>
<path d="M21.1 324.0 H28.1 V317.4Z" fill="#747474"/>
<path d="M56.1 324.0 H63.1 V317.4Z" fill="#747474"/>
<path d="M91.1 324.0 H98.1 V317.4Z" fill="#747474"/>
<path d="M126.1 324.0 H133.1 V317.4Z" fill="#747474"/>
<path d="M21.1 359.0 H28.1 V352.4Z" fill="#747474"/>
<path d="M21.1 394.0 H28.1 V387.4Z" fill="#747474"/>
<path d="M126.1 394.0 H133.1 V387.4Z" fill="#747474"/>
<path d="M56.1 429.0 H63.1 V422.4Z" fill="#747474"/>
<path d="M21.1 464.0 H28.1 V457.4Z" fill="#747474"/>
<path d="M56.1 464.0 H63.1 V457.4Z" fill="#747474"/>
<path d="M91.1 464.0 H98.1 V457.4Z" fill="#747474"/>
<path d="M126.1 464.0 H133.1 V457.4Z" fill="#747474"/>
<path d="M21.1 499.0 H28.1 V492.4Z" fill="#747474"/>
<path d="M56.1 499.0 H63.1 V492.4Z" fill="#747474"/>
<path d="M91.1 499.0 H98.1 V492.4Z" fill="#747474"/>
<path d="M126.1 499.0 H133.1 V492.4Z" fill="#747474"/>
<path d="M21.1 534.0 H28.1 V527.4Z" fill="#747474"/>
<path d="M4.1 191 V209.4 L8.3 205.4 L11.6 211.4 L14.4 210 L11.4 204.2 L16.6 203.4Z" fill="#fff" stroke="#000" stroke-width="1.3" stroke-linejoin="miter"/>
<circle cx="44.4" cy="200.3" r="2.6" fill="#fff" stroke="#000" stroke-width="1.2"/>
<path d="M71.4 209.7 L77.4 193.6 L88.8 206" fill="none" stroke="#000" stroke-width="1"/><rect x="75.65" y="191.85" width="3.5" height="3.5" fill="#fff" stroke="#000" stroke-width="1.15"/><rect x="87.05" y="204.25" width="3.5" height="3.5" fill="#fff" stroke="#000" stroke-width="1.15"/><rect x="69.65" y="207.95" width="3.5" height="3.5" fill="#fff" stroke="#000" stroke-width="1.15"/>
<path d="M104.9 193.6 Q110 190.6 115 191.8 Q123.6 194 123.6 201 Q123.6 207.6 115 209.6 Q110 210.4 104.9 208.5" fill="none" stroke="#000" stroke-width="1.1"/><rect x="103.15" y="191.85" width="3.5" height="3.5" fill="#fff" stroke="#000" stroke-width="1.15"/><rect x="120.75" y="187.75" width="3.5" height="3.5" fill="#fff" stroke="#000" stroke-width="1.15"/><rect x="103.15" y="206.75" width="3.5" height="3.5" fill="#fff" stroke="#000" stroke-width="1.15"/><rect x="123.25" y="209.15" width="3.5" height="3.5" fill="#fff" stroke="#000" stroke-width="1.15"/>
<circle cx="9.3" cy="235.1" r="11.6" fill="none" stroke="#000" stroke-width="1.2"/><path d="M9.8 234.8 L17.7 227.3" stroke="#444" stroke-width="0.8"/><rect x="8.05" y="233.05" width="3.5" height="3.5" fill="#fff" stroke="#000" stroke-width="1.15"/><rect x="15.95" y="225.55" width="3.5" height="3.5" fill="#fff" stroke="#000" stroke-width="1.15"/>
<ellipse cx="44.8" cy="237" rx="12.6" ry="8.5" fill="none" stroke="#000" stroke-width="1.2"/><path d="M44.8 228.4 V237.2 H56.3" fill="none" stroke="#444" stroke-width="0.8"/><rect x="43.05" y="226.65" width="3.5" height="3.5" fill="#fff" stroke="#000" stroke-width="1.15"/><rect x="43.05" y="235.45" width="3.5" height="3.5" fill="#fff" stroke="#000" stroke-width="1.15"/><rect x="54.55" y="235.45" width="3.5" height="3.5" fill="#fff" stroke="#000" stroke-width="1.15"/>
<path d="M71.4 226 V246.1 L88.8 236" fill="none" stroke="#555" stroke-width="0.8"/><path d="M71.4 226 Q82.5 227.5 88.8 236" fill="none" stroke="#000" stroke-width="1.3"/><rect x="69.65" y="224.25" width="3.5" height="3.5" fill="#fff" stroke="#000" stroke-width="1.15"/><rect x="87.05" y="234.25" width="3.5" height="3.5" fill="#fff" stroke="#000" stroke-width="1.15"/><rect x="69.65" y="244.35" width="3.5" height="3.5" fill="#fff" stroke="#000" stroke-width="1.15"/>
<rect x="104.9" y="229.6" width="20.3" height="12.8" fill="none" stroke="#000" stroke-width="1.4"/><rect x="123.25" y="228.05" width="3.5" height="3.5" fill="#fff" stroke="#000" stroke-width="1.15"/><rect x="103.15" y="240.65" width="3.5" height="3.5" fill="#fff" stroke="#000" stroke-width="1.15"/>
<path d="M-1 270.3 L4.4 261.4 H15 L20.4 270.3 L15 279.3 H4.4Z" fill="none" stroke="#000" stroke-width="1.2"/><path d="M9.8 270 H18.8" stroke="#444" stroke-width="0.8"/><rect x="8.05" y="268.25" width="3.5" height="3.5" fill="#fff" stroke="#000" stroke-width="1.15"/><rect x="17.05" y="268.25" width="3.5" height="3.5" fill="#fff" stroke="#000" stroke-width="1.15"/>
<path d="M36 261.2 H55.4 V278" fill="none" stroke="#777" stroke-width="0.8"/><path d="M36.4 261 Q45 260.6 50.2 266 Q55 271 54.9 278" fill="none" stroke="#111" stroke-width="1.6"/><rect x="33.15" y="259.25" width="3.5" height="3.5" fill="#fff" stroke="#000" stroke-width="1.15"/><rect x="53.05" y="277.95" width="3.5" height="3.5" fill="#fff" stroke="#000" stroke-width="1.15"/>
<path d="M75 261.2 L90.1 261.2 L83.3 281 L69.7 274.5Z" fill="url(#gBlueSurf)" stroke="#000" stroke-width="1.2"/><path d="M82.6 261.2 L76.5 277.8 M72.4 267.8 L86.8 271" stroke="#1a2a6c" stroke-width="0.9"/><rect x="73.25" y="259.25" width="3.5" height="3.5" fill="#fff" stroke="#000" stroke-width="1.15"/><rect x="88.35" y="259.25" width="3.5" height="3.5" fill="#fff" stroke="#000" stroke-width="1.15"/><rect x="67.95" y="272.75" width="3.5" height="3.5" fill="#fff" stroke="#000" stroke-width="1.15"/><rect x="81.55" y="279.25" width="3.5" height="3.5" fill="#fff" stroke="#000" stroke-width="1.15"/>
<path d="M103 265.6 L111.6 259 Q121.2 260.4 125.2 270 L124.8 276.4 L115.4 282.8 L115.6 275.6 Q113.4 268.6 103 265.6Z" fill="#fff" stroke="#000" stroke-width="1.2" stroke-linejoin="round"/><path d="M110.6 267.2 L118.2 261 Q123.6 264 125 270.4 L116 275.4 Q114.8 270.2 110.6 267.2Z" fill="url(#gBlueV)" stroke="#000" stroke-width="0.9"/>
<path d="M-1.5 300.5 L7.2 294 L19.6 297.6 V310.4 L11.2 316.6 L-1.5 312.6Z" fill="#5a78ee" stroke="#000" stroke-width="1.1" stroke-linejoin="round"/><path d="M-1.5 300.5 L7.2 294 L19.6 297.6 L11.4 303.8Z" fill="#a9b8fb"/><path d="M11.4 303.8 L19.6 297.6 V310.4 L11.2 316.6Z" fill="#3448bc"/>
<circle cx="49.6" cy="301.2" r="8.6" fill="url(#gBlueSp)" stroke="#000" stroke-width="1.2"/><path d="M41.5 302.2 Q49.6 305.2 57.7 302.2 M48.6 293.0 Q46.0 301.2 48.0 309.3" fill="none" stroke="#1a2a6c" stroke-width="0.9"/><circle cx="40.6" cy="310.2" r="8.6" fill="url(#gBlueSp)" stroke="#000" stroke-width="1.2"/><path d="M32.5 311.2 Q40.6 314.2 48.7 311.2 M39.6 302.0 Q37.0 310.2 39.0 318.3" fill="none" stroke="#1a2a6c" stroke-width="0.9"/>
<ellipse cx="80.2" cy="295.8" rx="6.9" ry="3.3" fill="#f4f4f6" stroke="#000" stroke-width="1.1"/><path d="M66.4 303 Q80 311 93.6 303 V314.2 Q80 322.6 66.4 314.2Z" fill="url(#gBlueV)" stroke="#000" stroke-width="1.1"/><ellipse cx="80" cy="312.8" rx="6.4" ry="2.9" fill="#93a6f8" stroke="#fff" stroke-width="1.6"/>
<path d="M113.8 294.2 L128.4 299.6 Q124 307 125.4 312 L116.4 317.8 L101.6 312.2 Q110 305.6 113.8 294.2Z" fill="url(#gBlueSurf)" stroke="#000" stroke-width="1.2" stroke-linejoin="round"/><path d="M108.8 302 L125.8 306.4 M118.4 296 Q116 306 109 315 M123.4 298 Q120 308 121 315" stroke="#1a2a6c" stroke-width="0.8" fill="none"/>
<path d="M5.35 327.2 L7.6 329.5 Q8.6 327.6 10.7 328.1 Q13.2 328.4 13.5 330.2 Q13.9 332.6 11.9 333.9 L13.4 336.1 L11.9 338.1 Q10.6 336.6 8.8 337.3 Q6.6 338 6.9 339.6 Q7.2 341.2 7.9 342.3 L5.7 344.6 L2.7 343 L-1 344.4 V334.2 Q1.2 335 2.3 334.6 Q4.6 333.8 4.2 332.3 Q3.8 330.8 2.7 330.2Z" fill="url(#gOrange2)" stroke="#000" stroke-width="1.1" stroke-linejoin="round"/><defs><linearGradient id="gOrange2" x1="0" y1="0" x2="1" y2="1"><stop offset="0" stop-color="#ff8c00"/><stop offset="1" stop-color="#ffc800"/></linearGradient></defs><path d="M13.4 336.1 L17.6 339.6 Q15.6 340.4 15.7 341.6 Q15.6 343.4 16.6 343.9 Q17.8 344.6 18.9 344.1 Q19.8 343.6 20.6 342.3 L23.7 345.3 L21.4 347.2 Q20.4 347.8 20.6 348.8 Q22.6 349.2 22.7 350.6 Q22.8 352.4 21.4 353 Q19.8 353.6 18.7 353 Q17.4 352.4 17.2 351.4 L14.5 354.5 L11.5 351.4 Q13.2 350.8 13.4 349.5 Q13.7 347.8 13 346.9 Q12 345.8 10.3 346.5 Q9 347 8.4 348.4 L5.7 344.6 L7.9 342.3 Q7.2 341.2 6.9 339.6 Q6.6 338 8.8 337.3 Q10.6 336.6 11.9 338.1Z" fill="#fff" stroke="#000" stroke-width="1.1" stroke-linejoin="round"/>
<path d="M31.2 340.7 L36.7 330 L37.3 346.5 L53.5 329.3 L45.9 347.4 H58.5 L47.4 352.6 L49.7 354.7 H31.2Z" fill="url(#gOrange)"/><path d="M31.4 340.5 L36.7 330 L37.3 346.5 L53.5 329.3 L45.9 347.4 H58.5 L47.4 352.6 L49.5 354.5" fill="none" stroke="#000" stroke-width="1.3" stroke-linejoin="miter"/>
<rect x="66.3" y="340.6" width="13.4" height="6" fill="#fff" stroke="#000" stroke-width="1.2"/><path d="M83.8 342.2 L91.4 349.2 L86.4 354.2 L79.4 347.2Z" fill="#fff" stroke="#000" stroke-width="1.1"/><path d="M79.2 330 H87.4 L79.8 346.6Z" fill="#16287c"/>
<rect x="102.6" y="342.8" width="23.2" height="6.4" fill="#fff" stroke="#000" stroke-width="1.2"/><path d="M115 332.2 H123.6 L115.4 349.6Z" fill="#16287c"/>
<circle cx="10" cy="371" r="6" fill="#6886f4" stroke="#000" stroke-width="2.6"/><circle cx="5.4" cy="379" r="6" fill="#fff" stroke="#000" stroke-width="2.6"/><circle cx="15" cy="379" r="6" fill="#12257a" stroke="#000" stroke-width="2.6"/><circle cx="10" cy="371" r="4.7" fill="#6886f4"/><circle cx="5.4" cy="379" r="4.7" fill="#fff"/><circle cx="15" cy="379" r="4.7" fill="#12257a"/>
<circle cx="45" cy="370.7" r="4.4" fill="#6886f4" stroke="#000" stroke-width="1"/><circle cx="38.5" cy="380.9" r="4.4" fill="#fff" stroke="#000" stroke-width="1"/><circle cx="51.2" cy="380.9" r="4.4" fill="#12257a" stroke="#000" stroke-width="1"/>
<path d="M67 370.4 Q77 367.6 82.4 374.6 Q86.6 380.6 85.6 388.8" fill="none" stroke="#111" stroke-width="1.7"/><rect x="71.90" y="367.90" width="3.8" height="3.8" fill="#fff" stroke="#000" stroke-width="1.1"/><rect x="84.30" y="380.60" width="3.8" height="3.8" fill="#fff" stroke="#000" stroke-width="1.1"/>
<path d="M102 370.4 Q112 367.8 117.6 374.8 Q122 380.8 120.4 388.4" fill="none" stroke="#000" stroke-width="2"/><path d="M101 365.2 H109 M113.6 366.6 Q121 371 124.4 378 M125.5 382.4 V390" fill="none" stroke="#000" stroke-width="1" stroke-dasharray="1.3 1.3"/><rect x="109.50" y="362.70" width="3.8" height="3.8" fill="#fff" stroke="#000" stroke-width="1.1"/><rect x="124.50" y="377.90" width="3.8" height="3.8" fill="#fff" stroke="#000" stroke-width="1.1"/>
<path d="M-1 400.4 L1.4 397.8 L19.6 403.8 V409.4 L16.6 411.4 L13.2 406.4 L12.6 420 L15.8 422 L13.2 424.2 L2.6 420.6 L5.2 419 L5.6 404.8 L-1 405.6Z" fill="#5a78ee" stroke="#000" stroke-width="1.1" stroke-linejoin="round"/><path d="M-1 400.4 L1.4 397.8 L19.6 403.8 L17.6 405.6Z" fill="#b4c2ff"/><path d="M7.6 405 L9.6 404.6 L9.4 421.4 L7.4 420.6Z" fill="#b4c2ff"/>
<rect x="34.2" y="413.9" width="7.8" height="7.8" fill="url(#gWhiteG)" stroke="#000" stroke-width="1.2"/><rect x="49.6" y="398.8" width="7.6" height="7.8" fill="url(#gBlueV)" stroke="#000" stroke-width="1.2"/><path d="M41.6 414.2 L48 407.8" stroke="#000" stroke-width="1.1"/><path d="M45 407.4 L48.6 407.2 L48.4 410.8" fill="none" stroke="#000" stroke-width="1.1"/>
<rect x="69.5" y="398.8" width="7.6" height="7.8" fill="url(#gBlueV)" stroke="#000" stroke-width="1.2"/><rect x="69.5" y="413.9" width="7.6" height="7.8" fill="url(#gWhiteG)" stroke="#000" stroke-width="1.2"/><rect x="84.4" y="402.4" width="7.8" height="7.8" fill="url(#gBlueV)" stroke="#000" stroke-width="1.2"/><rect x="79.5" y="406.5" width="7.8" height="7.8" fill="url(#gBlueV)" stroke="#000" stroke-width="1.2"/><rect x="84.4" y="416.5" width="7.8" height="7.8" fill="url(#gBlueV)" stroke="#000" stroke-width="1.2"/>
<rect x="101.5" y="398.8" width="7" height="17.8" fill="url(#gWhiteG)" stroke="#000" stroke-width="1.2"/><path d="M123.2 405 L128.2 409.6 L115.5 422.2 L111 417.3Z" fill="url(#gBlueV)" stroke="#000" stroke-width="1.2"/><path d="M108.7 400.8 Q115.6 401.2 119.8 406.2" fill="none" stroke="#000" stroke-width="1"/><path d="M115.6 406.6 L120 406.6 L119.6 402.2" fill="none" stroke="#000" stroke-width="1"/>
<path d="M-1.5 441 L8 434 L20.6 438.6 V451.6 L11.6 458.4 L-1.5 453.4Z" fill="#5a78ee" stroke="#000" stroke-width="1.1" stroke-linejoin="round"/><path d="M-1.5 441 L8 434 L20.6 438.6 L11.6 445.4Z" fill="#a9b8fb"/><path d="M11.6 445.4 L20.6 438.6 V451.6 L11.6 458.4Z" fill="#3448bc"/><path d="M6.6 451 L11.6 452.8 L16.4 449 V454.6 L11.6 458.4 L6.6 456.4Z" fill="#fff" stroke="#000" stroke-width="0.9"/><path d="M11.6 452.8 L16.4 449 V454.6 L11.6 458.4Z" fill="#bbb"/>
<path d="M31.8 454.5 H52.5 L58.4 447.5 H37.6Z" fill="#7088f0" stroke="#000" stroke-width="1.1"/><path d="M37.6 450.2 V439 M45 450.2 V439 M52.5 450.2 V439" stroke="#a09a98" stroke-width="1.8"/><path d="M35 440 L37.6 435 L40.2 440Z M42.4 440 L45 435 L47.6 440Z M49.9 440 L52.5 435 L55.1 440Z" fill="#a09a98"/>
<rect x="68.0" y="434.1" width="5.4" height="5.4" fill="url(#gBlueV)" stroke="#000" stroke-width="1.2"/>
<rect x="68.0" y="442.6" width="5.4" height="5.4" fill="url(#gBlueV)" stroke="#000" stroke-width="1.2"/>
<rect x="68.0" y="451.4" width="5.4" height="5.4" fill="url(#gWhiteG)" stroke="#000" stroke-width="1.2"/>
<rect x="76.7" y="434.1" width="5.4" height="5.4" fill="url(#gBlueV)" stroke="#000" stroke-width="1.2"/>
<rect x="76.7" y="442.6" width="5.4" height="5.4" fill="url(#gBlueV)" stroke="#000" stroke-width="1.2"/>
<rect x="76.7" y="451.4" width="5.4" height="5.4" fill="url(#gBlueV)" stroke="#000" stroke-width="1.2"/>
<rect x="85.3" y="434.1" width="5.4" height="5.4" fill="url(#gBlueV)" stroke="#000" stroke-width="1.2"/>
<rect x="85.3" y="442.6" width="5.4" height="5.4" fill="url(#gBlueV)" stroke="#000" stroke-width="1.2"/>
<rect x="85.3" y="451.4" width="5.4" height="5.4" fill="url(#gBlueV)" stroke="#000" stroke-width="1.2"/>
<rect x="109.3" y="434.2" width="11.4" height="6" fill="url(#gWhiteG)" stroke="#000" stroke-width="1.2"/><rect x="112" y="442.6" width="6" height="5.2" fill="url(#gWhiteG)" stroke="#000" stroke-width="1.2"/><rect x="110.5" y="450.8" width="9" height="7" fill="url(#gWhiteG)" stroke="#000" stroke-width="1.2"/><path d="M115 432.2 V459.6" stroke="#d40000" stroke-width="1.7"/>
<path d="M8.4 468.8 L14 471.4 L10 478Z" fill="#fff" stroke="#000" stroke-width="0.9"/><path d="M-1 474.6 L3.4 471.8 L9 475.6 L7.4 490.6 L-1 488Z" fill="url(#gWhiteG)" stroke="#000" stroke-width="1"/><path d="M11.4 474 L14.4 472 L20.8 476 L14.2 492 L11.4 494 L5.2 490.4Z" fill="url(#gBlueV)" stroke="#000" stroke-width="1.1" stroke-linejoin="round"/><path d="M14.4 472 L20.8 476 L14.2 492 L11.4 494 L17.6 477.4Z" fill="#3a54d0"/>
<rect x="39.4" y="467.4" width="3.8" height="27" fill="#7c94f6" stroke="#000" stroke-width="1.2"/><circle cx="32.6" cy="474.4" r="2.5" fill="#000"/><circle cx="50" cy="474.4" r="2.5" fill="#000"/><path d="M31.6 478.6 H39.6 M33 478.8 L34.6 485.4 L39.6 486.6 L38 494.6" fill="none" stroke="#000" stroke-width="2.3"/><path d="M43.4 479.8 L51 479 L56 484.4 L53.6 487.6 L60.6 494.4" fill="none" stroke="#000" stroke-width="2.2"/>
<path d="M68 483.4 L70.4 481.8 L74 486.6 Q82 474.6 92.2 469.2 L92.4 470 Q83 478.4 74.4 492.6 L73 492.4Z" fill="#000"/>
<path d="M102.6 476.6 L109.4 471.2 L118.4 474.6 V482 L112.4 487.6 L102.6 484.6Z" fill="#e4e4e4" stroke="#000" stroke-width="1.1" stroke-linejoin="round"/><path d="M112.6 479.6 L118.4 474.6 V482 L112.4 487.6Z" fill="#9a9a9a"/><path d="M102.6 476.6 L112.6 479.6 L112.4 487.6 L102.6 484.6Z" fill="#d0d0d0"/><path d="M120.4 473 L127 486 Q127 490.4 120.6 490.4 Q114.6 490 114.8 486.6Z" fill="url(#gWhiteG)" stroke="#000" stroke-width="1.1" stroke-linejoin="round"/>
<path d="M6.2 509.4 L12.6 502.8 L18 502.4 L21.4 503.4 V507.8 L17.2 509.6 L13.6 510.8 L8.8 511.6Z" fill="#fff" stroke="#222" stroke-width="0.9"/><path d="M7 509.8 L11.8 504.6 M8.8 510.6 L13.6 505.4 M10.8 511 L15 506.4 M12.8 510.8 L16 507.4" stroke="#333" stroke-width="0.8"/><rect x="21.4" y="502.2" width="2.6" height="7.4" fill="#000"/><path d="M9.4 512.8 L19.8 522.2 L11.4 529.6 L-1 524.6Z" fill="#f6d264" stroke="#000" stroke-width="1.1" stroke-linejoin="round"/><path d="M9.4 512.8 L19.8 522.2 L11.4 529.6Z" fill="#cfa234"/><path d="M9.4 512.8 L11.4 529.6" stroke="#7a5a10" stroke-width="0.6"/>
</svg>
<div class="a" style="left:0px;top:573.3px;width:139.3px;height:396.7px;background:#e9eaee;border-radius:0 6px 0 0"></div>
<div class="a" style="left:117px;top:573.3px;width:22.3px;height:24px;background:#ecedf0;border-radius:0 6px 0 0"></div>
<div class="a" style="left:116.6px;top:575px;width:1px;height:21px;background:#e5e6ea;"></div>
<div class="t" style="left:-2.80px;top:577.04px;font-size:14.6px;color:#6a6b75;transform:scaleX(0.8977);">Osnap</div>
<svg style="left:0;top:0" width="1" height="1"><path d="M133.06 583.55 L133.06 586.25 L131.21 586.39 L130.85 587.25 L132.07 588.66 L130.16 590.57 L128.75 589.35 L127.89 589.71 L127.75 591.56 L125.05 591.56 L124.91 589.71 L124.05 589.35 L122.64 590.57 L120.73 588.66 L121.95 587.25 L121.59 586.39 L119.74 586.25 L119.74 583.55 L121.59 583.41 L121.95 582.55 L120.73 581.14 L122.64 579.23 L124.05 580.45 L124.91 580.09 L125.05 578.24 L127.75 578.24 L127.89 580.09 L128.75 580.45 L130.16 579.23 L132.07 581.14 L130.85 582.55 L131.21 583.41Z M128.85 584.90 A2.45 2.45 0 1 0 123.95 584.90 A2.45 2.45 0 1 0 128.85 584.90Z" fill="#c6c7cc" fill-rule="evenodd"/></svg>
<div class="a" style="left:30px;top:597.2px;width:10px;height:10px;background:#d9dadf;"></div>
<div class="a" style="left:0px;top:597.2px;width:38px;height:24.6px;background:#e9eaee;border-radius:0 7px 0 0"></div>
<div class="a" style="left:38px;top:597.2px;width:101.3px;height:24.6px;background:#d9dadf;border-radius:0 0 0 7px"></div>
<svg style="left:0;top:590px" width="140" height="40"><circle cx="13.6" cy="19.1" r="8.5" fill="none" stroke="#555" stroke-width="0.9"/><path d="M15.6 19.1 H25" stroke="#000" stroke-width="1.1"/><rect x="12.30" y="17.50" width="3.2" height="3.2" fill="#fff" stroke="#000" stroke-width="1.2"/><defs><linearGradient id="gFun" x1="0" y1="0" x2="1" y2="0"><stop offset="0" stop-color="#b8b8b8"/><stop offset="0.5" stop-color="#6c6c6c"/><stop offset="1" stop-color="#a8a8a8"/></linearGradient></defs><path d="M53.4 12.8 Q59.6 10.6 65.8 12.8 L60.9 19.6 V26.6 Q59.6 27.8 58.3 26.6 V19.6Z" fill="url(#gFun)" stroke="#222" stroke-width="1.1" stroke-linejoin="round"/><path d="M66.6 9.8 H69 V12.2 M51.4 24.6 V27.2 H54" fill="none" stroke="#222" stroke-width="1.1"/></svg>
<div class="t" style="left:19.00px;top:630.14px;font-size:14.6px;color:#23263a;transform:scaleX(0.8846);">End</div>
<div class="t" style="left:19.00px;top:650.14px;font-size:14.6px;color:#23263a;transform:scaleX(0.9676);">Near</div>
<div class="t" style="left:19.00px;top:670.14px;font-size:14.6px;color:#23263a;transform:scaleX(0.9534);">Point</div>
<div class="t" style="left:19.00px;top:690.14px;font-size:14.6px;color:#23263a;transform:scaleX(1.0170);">Mid</div>
<div class="t" style="left:19.00px;top:710.14px;font-size:14.6px;color:#23263a;transform:scaleX(0.8673);">Cen</div>
<div class="t" style="left:19.00px;top:730.14px;font-size:14.6px;color:#23263a;transform:scaleX(0.9538);">Int</div>
<div class="t" style="left:19.00px;top:750.14px;font-size:14.6px;color:#23263a;transform:scaleX(0.8874);">Perp</div>
<div class="t" style="left:19.00px;top:770.14px;font-size:14.6px;color:#23263a;transform:scaleX(0.9191);">Tan</div>
<div class="t" style="left:19.00px;top:790.14px;font-size:14.6px;color:#23263a;transform:scaleX(0.9790);">Quad</div>
<div class="t" style="left:19.00px;top:810.14px;font-size:14.6px;color:#23263a;transform:scaleX(0.9967);">Knot</div>
<div class="t" style="left:19.00px;top:830.14px;font-size:14.6px;color:#23263a;transform:scaleX(0.9644);">Vertex</div>
<div class="t" style="left:19.00px;top:850.14px;font-size:14.6px;color:#23263a;transform:scaleX(0.9890);">Project</div>
<div class="t" style="left:19.00px;top:871.14px;font-size:14.6px;color:#23263a;transform:scaleX(0.9969);">Disable</div>
<svg style="left:0;top:0" width="20" height="994"><rect x="-3" y="629.4" width="14.5" height="14.6" fill="#edeef3" stroke="#b6bfd8" stroke-width="1"/><path d="M-0.2 637.0 L3.6 640.8 L9.8 632.8" fill="none" stroke="#1c1c1c" stroke-width="1.8"/><rect x="-3" y="649.4" width="14.5" height="14.6" fill="#edeef3" stroke="#b6bfd8" stroke-width="1"/><rect x="-3" y="669.4" width="14.5" height="14.6" fill="#edeef3" stroke="#b6bfd8" stroke-width="1"/><rect x="-3" y="689.4" width="14.5" height="14.6" fill="#edeef3" stroke="#b6bfd8" stroke-width="1"/><path d="M-0.2 697.0 L3.6 700.8 L9.8 692.8" fill="none" stroke="#1c1c1c" stroke-width="1.8"/><rect x="-3" y="709.4" width="14.5" height="14.6" fill="#edeef3" stroke="#b6bfd8" stroke-width="1"/><path d="M-0.2 717.0 L3.6 720.8 L9.8 712.8" fill="none" stroke="#1c1c1c" stroke-width="1.8"/><rect x="-3" y="729.4" width="14.5" height="14.6" fill="#edeef3" stroke="#b6bfd8" stroke-width="1"/><rect x="-3" y="749.4" width="14.5" height="14.6" fill="#edeef3" stroke="#b6bfd8" stroke-width="1"/><rect x="-3" y="769.4" width="14.5" height="14.6" fill="#edeef3" stroke="#b6bfd8" stroke-width="1"/><rect x="-3" y="789.4" width="14.5" height="14.6" fill="#edeef3" stroke="#b6bfd8" stroke-width="1"/><path d="M-0.2 797.0 L3.6 800.8 L9.8 792.8" fill="none" stroke="#1c1c1c" stroke-width="1.8"/><rect x="-3" y="809.4" width="14.5" height="14.6" fill="#edeef3" stroke="#b6bfd8" stroke-width="1"/><rect x="-3" y="829.4" width="14.5" height="14.6" fill="#edeef3" stroke="#b6bfd8" stroke-width="1"/><rect x="-3" y="849.4" width="14.5" height="14.6" fill="#edeef3" stroke="#b6bfd8" stroke-width="1"/><rect x="-3" y="870.4" width="14.5" height="14.6" fill="#edeef3" stroke="#b6bfd8" stroke-width="1"/></svg>
<div class="a" style="left:144px;top:174px;width:753px;height:384px;background:#c9cfe2"></div>
<svg style="left:145px;top:175px;overflow:hidden" width="751" height="382" viewBox="145 175 751 382"><rect x="145" y="175" width="751" height="382" fill="#9ea4ad"/>
<path d="M110.5 175 V557 M131.5 175 V557 M173.5 175 V557 M194.5 175 V557 M215.5 175 V557 M236.5 175 V557 M278.5 175 V557 M299.5 175 V557 M321.5 175 V557 M342.5 175 V557 M384.5 175 V557 M405.5 175 V557 M426.5 175 V557 M447.5 175 V557 M489.5 175 V557 M511.5 175 V557 M532.5 175 V557 M553.5 175 V557 M595.5 175 V557 M616.5 175 V557 M637.5 175 V557 M658.5 175 V557 M700.5 175 V557 M722.5 175 V557 M743.5 175 V557 M764.5 175 V557 M806.5 175 V557 M827.5 175 V557 M848.5 175 V557 M869.5 175 V557 M912.5 175 V557 M933.5 175 V557 M145 147.5 H896 M145 168.5 H896 M145 189.5 H896 M145 231.5 H896 M145 252.5 H896 M145 274.5 H896 M145 295.5 H896 M145 337.5 H896 M145 358.5 H896 M145 379.5 H896 M145 400.5 H896 M145 442.5 H896 M145 464.5 H896 M145 485.5 H896 M145 506.5 H896 M145 548.5 H896 M145 569.5 H896 M145 590.5 H896 " stroke="#959ba5" stroke-width="1" fill="none" shape-rendering="crispEdges"/>
<path d="M152.5 175 V557 M257.5 175 V557 M363.5 175 V557 M468.5 175 V557 M574.5 175 V557 M679.5 175 V557 M785.5 175 V557 M890.5 175 V557 M145 210.5 H896 M145 316.5 H896 M145 421.5 H896 M145 527.5 H896 " stroke="#83878f" stroke-width="1" fill="none" shape-rendering="crispEdges"/>
<path d="M363 175 V423" stroke="#4a9a44" stroke-width="2" shape-rendering="crispEdges"/><path d="M363 422 H896" stroke="#974241" stroke-width="2" shape-rendering="crispEdges"/><circle cx="365.45" cy="423.9" r="211.05" fill="none" stroke="#000" stroke-width="1.7"/><circle cx="365.45" cy="424.2" r="85.56" fill="none" stroke="#000" stroke-width="1.7"/><rect x="515.3" y="192.4" width="40.5" height="220.8" fill="none" stroke="#000" stroke-width="2.4"/>
<path d="M189.5 476.8 V513.5 H225.8" fill="none" stroke="#5d5e62" stroke-width="1.2"/>
</svg>
<div class="t" style="left:192.40px;top:462.48px;font-size:15.5px;color:#5d5e62;">y</div>
<div class="t" style="left:229.20px;top:501.88px;font-size:15.5px;color:#5d5e62;">x</div>
<div class="a" style="left:145px;top:175px;width:58px;height:23px;background:#e1e2e6;clip-path:polygon(0 0,100% 0,100% 20.4px,55.4px 100%,0 100%)"></div>
<div class="t" style="left:153.10px;top:178.84px;font-size:14.6px;color:#5c5d67;font-weight:bold;transform:scaleX(1.0537);">Top</div>
<div class="a" style="left:189.1px;top:177px;width:1.1px;height:19.8px;background:#4e4f58"></div>
<svg style="left:190.7px;top:183.1px" width="10" height="6"><path d="M0 0 H9.2 L4.6 4.8Z" fill="#55565e"/></svg>
<div class="a" style="left:144px;top:562px;width:753px;height:380px;background:#c9cfe2"></div>
<svg style="left:145px;top:563px;overflow:hidden" width="751" height="378" viewBox="145 563 751 378"><rect x="145" y="563" width="751" height="378" fill="#9ea4ad"/>
<path d="M131.5 563 V941 M143.5 563 V941 M168.5 563 V941 M180.5 563 V941 M192.5 563 V941 M204.5 563 V941 M229.5 563 V941 M241.5 563 V941 M253.5 563 V941 M266.5 563 V941 M290.5 563 V941 M302.5 563 V941 M315.5 563 V941 M327.5 563 V941 M351.5 563 V941 M364.5 563 V941 M376.5 563 V941 M388.5 563 V941 M413.5 563 V941 M425.5 563 V941 M437.5 563 V941 M450.5 563 V941 M474.5 563 V941 M486.5 563 V941 M499.5 563 V941 M511.5 563 V941 M535.5 563 V941 M548.5 563 V941 M560.5 563 V941 M572.5 563 V941 M597.5 563 V941 M609.5 563 V941 M621.5 563 V941 M634.5 563 V941 M658.5 563 V941 M670.5 563 V941 M683.5 563 V941 M695.5 563 V941 M719.5 563 V941 M732.5 563 V941 M744.5 563 V941 M756.5 563 V941 M781.5 563 V941 M793.5 563 V941 M805.5 563 V941 M818.5 563 V941 M842.5 563 V941 M854.5 563 V941 M867.5 563 V941 M879.5 563 V941 M903.5 563 V941 M916.5 563 V941 M145 552.5 H896 M145 565.5 H896 M145 577.5 H896 M145 589.5 H896 M145 614.5 H896 M145 626.5 H896 M145 638.5 H896 M145 651.5 H896 M145 675.5 H896 M145 687.5 H896 M145 700.5 H896 M145 712.5 H896 M145 736.5 H896 M145 749.5 H896 M145 761.5 H896 M145 773.5 H896 M145 798.5 H896 M145 810.5 H896 M145 822.5 H896 M145 835.5 H896 M145 859.5 H896 M145 871.5 H896 M145 884.5 H896 M145 896.5 H896 M145 920.5 H896 M145 933.5 H896 M145 945.5 H896 M145 957.5 H896 " stroke="#959ba5" stroke-width="1" fill="none" shape-rendering="crispEdges"/>
<path d="M155.5 563 V941 M217.5 563 V941 M278.5 563 V941 M339.5 563 V941 M401.5 563 V941 M462.5 563 V941 M523.5 563 V941 M585.5 563 V941 M646.5 563 V941 M707.5 563 V941 M769.5 563 V941 M830.5 563 V941 M891.5 563 V941 M145 540.5 H896 M145 602.5 H896 M145 663.5 H896 M145 724.5 H896 M145 786.5 H896 M145 847.5 H896 M145 908.5 H896 " stroke="#83878f" stroke-width="1" fill="none" shape-rendering="crispEdges"/>
<path d="M524 563 V725" stroke="#4a9a44" stroke-width="2" shape-rendering="crispEdges"/><path d="M647 725 H896" stroke="#974241" stroke-width="2" shape-rendering="crispEdges"/><path d="M402 725 H647.3" stroke="#000" stroke-width="2" shape-rendering="crispEdges"/><rect x="611.8" y="663.9" width="23.8" height="61.1" fill="none" stroke="#000" stroke-width="2.4"/>
<path d="M189.5 861.5999999999999 V898.3 H225.8" fill="none" stroke="#5d5e62" stroke-width="1.2"/>
</svg>
<div class="t" style="left:192.40px;top:848.48px;font-size:15.5px;color:#5d5e62;">z</div>
<div class="t" style="left:229.20px;top:886.68px;font-size:15.5px;color:#5d5e62;">x</div>
<div class="a" style="left:145px;top:563px;width:70.1px;height:23px;background:#e1e2e6;clip-path:polygon(0 0,100% 0,100% 20.4px,67.5px 100%,0 100%)"></div>
<div class="t" style="left:154.70px;top:566.84px;font-size:14.6px;color:#5c5d67;font-weight:bold;">Front</div>
<div class="a" style="left:201.2px;top:565px;width:1.1px;height:19.8px;background:#4e4f58"></div>
<svg style="left:202.8px;top:571.1px" width="10" height="6"><path d="M0 0 H9.2 L4.6 4.8Z" fill="#55565e"/></svg>
<div class="a" style="left:901px;top:562px;width:753px;height:380px;background:#c9cfe2"></div>
<svg style="left:902px;top:563px;overflow:hidden" width="751" height="378" viewBox="902 563 751 378"><rect x="902" y="563" width="751" height="378" fill="#9ea4ad"/>
<path d="M882.5 563 V941 M895.5 563 V941 M907.5 563 V941 M931.5 563 V941 M944.5 563 V941 M956.5 563 V941 M968.5 563 V941 M993.5 563 V941 M1005.5 563 V941 M1017.5 563 V941 M1030.5 563 V941 M1054.5 563 V941 M1066.5 563 V941 M1079.5 563 V941 M1091.5 563 V941 M1115.5 563 V941 M1128.5 563 V941 M1140.5 563 V941 M1152.5 563 V941 M1177.5 563 V941 M1189.5 563 V941 M1201.5 563 V941 M1214.5 563 V941 M1238.5 563 V941 M1250.5 563 V941 M1263.5 563 V941 M1275.5 563 V941 M1299.5 563 V941 M1312.5 563 V941 M1324.5 563 V941 M1336.5 563 V941 M1361.5 563 V941 M1373.5 563 V941 M1385.5 563 V941 M1397.5 563 V941 M1422.5 563 V941 M1434.5 563 V941 M1447.5 563 V941 M1459.5 563 V941 M1483.5 563 V941 M1496.5 563 V941 M1508.5 563 V941 M1520.5 563 V941 M1545.5 563 V941 M1557.5 563 V941 M1569.5 563 V941 M1581.5 563 V941 M1606.5 563 V941 M1618.5 563 V941 M1631.5 563 V941 M1643.5 563 V941 M1667.5 563 V941 M902 542.5 H1653 M902 554.5 H1653 M902 566.5 H1653 M902 579.5 H1653 M902 603.5 H1653 M902 616.5 H1653 M902 628.5 H1653 M902 640.5 H1653 M902 665.5 H1653 M902 677.5 H1653 M902 689.5 H1653 M902 701.5 H1653 M902 726.5 H1653 M902 738.5 H1653 M902 750.5 H1653 M902 763.5 H1653 M902 787.5 H1653 M902 800.5 H1653 M902 812.5 H1653 M902 824.5 H1653 M902 849.5 H1653 M902 861.5 H1653 M902 873.5 H1653 M902 885.5 H1653 M902 910.5 H1653 M902 922.5 H1653 M902 934.5 H1653 M902 947.5 H1653 " stroke="#959ba5" stroke-width="1" fill="none" shape-rendering="crispEdges"/>
<path d="M919.5 563 V941 M980.5 563 V941 M1042.5 563 V941 M1103.5 563 V941 M1164.5 563 V941 M1226.5 563 V941 M1287.5 563 V941 M1348.5 563 V941 M1410.5 563 V941 M1471.5 563 V941 M1532.5 563 V941 M1594.5 563 V941 M1655.5 563 V941 M902 591.5 H1653 M902 652.5 H1653 M902 714.5 H1653 M902 775.5 H1653 M902 836.5 H1653 M902 898.5 H1653 M902 959.5 H1653 " stroke="#83878f" stroke-width="1" fill="none" shape-rendering="crispEdges"/>
<path d="M1042 563 V776" stroke="#4a9a44" stroke-width="2" shape-rendering="crispEdges"/><path d="M1175.8 776 H1653" stroke="#974241" stroke-width="2" shape-rendering="crispEdges"/><path d="M918 776 H1176" stroke="#000" stroke-width="2" shape-rendering="crispEdges"/><rect x="1047" y="714.8" width="128.8" height="61.2" fill="none" stroke="#000" stroke-width="2.4"/>
<path d="M946.5 861.3 V898.0 H982.8" fill="none" stroke="#5d5e62" stroke-width="1.2"/>
</svg>
<div class="t" style="left:949.50px;top:848.28px;font-size:15.5px;color:#5d5e62;">z</div>
<div class="t" style="left:986.00px;top:883.88px;font-size:15.5px;color:#5d5e62;">y</div>
<div class="a" style="left:902px;top:563px;width:69.6px;height:23px;background:#e1e2e6;clip-path:polygon(0 0,100% 0,100% 20.4px,67.0px 100%,0 100%)"></div>
<div class="t" style="left:911.20px;top:566.84px;font-size:14.6px;color:#5c5d67;font-weight:bold;transform:scaleX(0.9906);">Right</div>
<div class="a" style="left:957.7px;top:565px;width:1.1px;height:19.8px;background:#4e4f58"></div>
<svg style="left:959.3px;top:571.1px" width="10" height="6"><path d="M0 0 H9.2 L4.6 4.8Z" fill="#55565e"/></svg>
<div class="a" style="left:901px;top:174px;width:753px;height:384px;background:#c9cfe2"></div>
<svg style="left:902px;top:175px;overflow:hidden" width="751" height="382" viewBox="902 175 751 382"><rect x="902" y="175" width="751" height="382" fill="#9ea4ad"/>
<path d="M-5635.8 4251.3 L897.9 -8.9 M-5374.7 4253.0 L910.6 -9.0 M-5244.1 4253.8 L916.9 -9.1 M-5113.5 4254.7 L923.3 -9.1 M-4982.9 4255.5 L929.6 -9.2 M-4721.8 4257.1 L942.3 -9.2 M-4591.2 4258.0 L948.6 -9.3 M-4460.6 4258.8 L954.9 -9.3 M-4330.0 4259.6 L961.2 -9.4 M-4068.8 4261.3 L973.8 -9.5 M-3938.3 4262.1 L980.1 -9.5 M-3807.7 4263.0 L986.4 -9.6 M-3677.1 4263.8 L992.7 -9.6 M-3415.9 4265.4 L1005.3 -9.7 M-3285.3 4266.3 L1011.5 -9.7 M-3154.7 4267.1 L1017.8 -9.8 M-3024.2 4267.9 L1024.1 -9.8 M-2763.0 4269.6 L1036.6 -9.9 M-2632.4 4270.4 L1042.8 -10.0 M-2501.8 4271.3 L1049.1 -10.0 M-2371.2 4272.1 L1055.3 -10.1 M-2110.1 4273.7 L1067.8 -10.2 M-1979.5 4274.6 L1074.0 -10.2 M-1848.9 4275.4 L1080.2 -10.2 M-1718.3 4276.2 L1086.4 -10.3 M-1457.2 4277.9 L1098.8 -10.4 M-1326.6 4278.7 L1105.0 -10.4 M-1196.0 4279.6 L1111.2 -10.5 M-1065.4 4280.4 L1117.4 -10.5 M-804.2 4282.0 L1129.8 -10.6 M-673.7 4282.9 L1135.9 -10.6 M-543.1 4283.7 L1142.1 -10.7 M-412.5 4284.5 L1148.3 -10.7 M-151.3 4286.2 L1160.6 -10.8 M-20.7 4287.0 L1166.7 -10.9 M109.9 4287.8 L1172.9 -10.9 M240.4 4288.7 L1179.0 -11.0 M501.6 4290.3 L1191.3 -11.0 M632.2 4291.2 L1197.4 -11.1 M762.8 4292.0 L1203.5 -11.1 M893.4 4292.8 L1209.6 -11.2 M1154.5 4294.5 L1221.9 -11.3 M1285.1 4295.3 L1228.0 -11.3 M1415.7 4296.1 L1234.1 -11.3 M1546.3 4297.0 L1240.2 -11.4 M1807.4 4298.6 L1252.3 -11.5 M1938.0 4299.5 L1258.4 -11.5 M2068.6 4300.3 L1264.5 -11.6 M2199.2 4301.1 L1270.5 -11.6 M2460.4 4302.8 L1282.7 -11.7 M2590.9 4303.6 L1288.7 -11.7 M2721.5 4304.4 L1294.8 -11.8 M2852.1 4305.3 L1300.8 -11.8 M3113.3 4306.9 L1312.9 -11.9 M3243.9 4307.8 L1318.9 -12.0 M3374.5 4308.6 L1324.9 -12.0 M3505.0 4309.4 L1331.0 -12.0 M3766.2 4311.1 L1343.0 -12.1 M3896.8 4311.9 L1349.0 -12.2 M4027.4 4312.7 L1355.0 -12.2 M4158.0 4313.6 L1361.0 -12.3 M4419.1 4315.2 L1373.0 -12.4 M4549.7 4316.1 L1379.0 -12.4 M4680.3 4316.9 L1384.9 -12.4 M4810.9 4317.7 L1390.9 -12.5 M5072.0 4319.4 L1402.8 -12.6 M5202.6 4320.2 L1408.8 -12.6 M5333.2 4321.0 L1414.8 -12.7 M5463.8 4321.9 L1420.7 -12.7 M5725.0 4323.5 L1432.6 -12.8 M5855.6 4324.4 L1438.5 -12.8 M5986.1 4325.2 L1444.5 -12.9 M6116.7 4326.0 L1450.4 -12.9 M6377.9 4327.7 L1462.2 -13.0 M6508.5 4328.5 L1468.1 -13.0 M6639.1 4329.3 L1474.1 -13.1 M6769.6 4330.2 L1480.0 -13.1 M7030.8 4331.8 L1491.8 -13.2 M7161.4 4332.7 L1497.7 -13.2 M7292.0 4333.5 L1503.5 -13.3 M7422.6 4334.3 L1509.4 -13.3 M7683.7 4336.0 L1521.2 -13.4 M7814.3 4336.8 L1527.0 -13.5 M7944.9 4337.6 L1532.9 -13.5 M8075.5 4338.5 L1538.8 -13.5 M8336.6 4340.1 L1550.5 -13.6 M8467.2 4341.0 L1556.3 -13.7 M8597.8 4341.8 L1562.2 -13.7 M8728.4 4342.6 L1568.0 -13.8 M8989.6 4344.3 L1579.7 -13.8 M9120.2 4345.1 L1585.5 -13.9 M9250.7 4345.9 L1591.3 -13.9 M9381.3 4346.8 L1597.1 -14.0 M9642.5 4348.4 L1608.7 -14.0 M9773.1 4349.3 L1614.5 -14.1 M9903.7 4350.1 L1620.3 -14.1 M10034.2 4350.9 L1626.1 -14.2 M10295.4 4352.6 L1637.7 -14.3 M10426.0 4353.4 L1643.5 -14.3 M10556.6 4354.2 L1649.3 -14.3 M10687.2 4355.1 L1655.0 -14.4 M-350.4 731.6 L3466.3 541.2 M-307.6 705.7 L3418.6 525.0 M-267.0 681.1 L3372.9 509.4 M-228.5 657.8 L3329.1 494.5 M-157.2 614.7 L3246.6 466.4 M-124.1 594.6 L3207.8 453.2 M-92.6 575.5 L3170.4 440.4 M-62.5 557.3 L3134.4 428.2 M-6.2 523.2 L3066.2 404.9 M20.1 507.3 L3033.9 393.9 M45.3 492.0 L3002.7 383.3 M69.5 477.4 L2972.6 373.1 M115.1 449.8 L2915.3 353.5 M136.5 436.8 L2888.1 344.3 M157.1 424.3 L2861.7 335.3 M177.0 412.3 L2836.1 326.6 M214.6 389.5 L2787.3 309.9 M232.4 378.8 L2764.0 302.0 M249.6 368.4 L2741.4 294.3 M266.2 358.3 L2719.4 286.8 M297.7 339.2 L2677.4 272.5 M312.7 330.1 L2657.2 265.6 M327.3 321.3 L2637.6 258.9 M341.4 312.8 L2618.5 252.4 M368.2 296.5 L2581.8 239.9 M381.1 288.7 L2564.2 233.9 M393.5 281.2 L2547.1 228.1 M405.6 273.9 L2530.3 222.4 M428.8 259.9 L2498.1 211.4 M439.9 253.1 L2482.6 206.1 M450.7 246.6 L2467.4 200.9 M461.2 240.2 L2452.7 195.9 M481.3 228.0 L2424.1 186.2 M491.0 222.2 L2410.3 181.5 M500.4 216.5 L2396.9 176.9 M509.6 210.9 L2383.7 172.4 M527.4 200.2 L2358.3 163.7 M535.9 195.0 L2345.9 159.5 M544.2 190.0 L2333.9 155.4 M552.4 185.0 L2322.1 151.4 M568.0 175.5 L2299.3 143.6 M575.6 170.9 L2288.2 139.9 " stroke="#959ba5" stroke-width="1" fill="none"/>
<path d="M-5505.3 4252.2 L904.2 -9.0 M-4852.3 4256.3 L935.9 -9.2 M-4199.4 4260.5 L967.5 -9.4 M-3546.5 4264.6 L999.0 -9.7 M-2893.6 4268.8 L1030.3 -9.9 M-2240.7 4272.9 L1061.5 -10.1 M-1587.7 4277.1 L1092.6 -10.3 M-934.8 4281.2 L1123.6 -10.6 M-281.9 4285.4 L1154.4 -10.8 M371.0 4289.5 L1185.2 -11.0 M1023.9 4293.7 L1215.8 -11.2 M1676.9 4297.8 L1246.2 -11.4 M2329.8 4302.0 L1276.6 -11.7 M2982.7 4306.1 L1306.8 -11.9 M3635.6 4310.3 L1337.0 -12.1 M4288.5 4314.4 L1367.0 -12.3 M4941.5 4318.5 L1396.9 -12.5 M5594.4 4322.7 L1426.7 -12.7 M6247.3 4326.8 L1456.3 -13.0 M6900.2 4331.0 L1485.9 -13.2 M7553.1 4335.1 L1515.3 -13.4 M8206.1 4339.3 L1544.6 -13.6 M8859.0 4343.4 L1573.8 -13.8 M9511.9 4347.6 L1602.9 -14.0 M10164.8 4351.7 L1631.9 -14.2 M-395.8 759.1 L3516.0 558.2 M-192.0 635.7 L3287.0 480.2 M-33.7 539.9 L3099.7 416.3 M92.7 463.3 L2943.5 363.1 M196.1 400.7 L2811.4 318.1 M282.2 348.6 L2698.1 279.5 M355.0 304.5 L2599.9 246.1 M417.4 266.8 L2514.0 216.8 M471.4 234.1 L2438.2 191.0 M518.6 205.5 L2370.8 168.0 M560.3 180.2 L2310.6 147.5 " stroke="#83878f" stroke-width="1" fill="none"/>
<path d="M1279.4 320.1 L1243.0 -44.1" stroke="#4a9a44" stroke-width="1.9"/><path d="M1279.4 320.1 L3074.5 268.8" stroke="#974241" stroke-width="1.9"/>
<path d="M1435.8 316.1 L1434.6 313.2 L1433.2 310.3 L1431.6 307.5 L1429.9 304.7 L1428.0 302.0 L1426.0 299.3 L1423.8 296.7 L1421.5 294.1 L1419.0 291.6 L1416.4 289.1 L1413.7 286.7 L1410.8 284.4 L1407.8 282.1 L1404.8 279.9 L1401.5 277.7 L1398.2 275.6 L1394.8 273.6 L1391.3 271.6 L1387.7 269.8 L1384.0 267.9 L1380.2 266.2 L1376.3 264.5 L1372.4 262.9 L1368.4 261.4 L1364.3 259.9 L1360.1 258.6 L1355.9 257.3 L1351.6 256.0 L1347.3 254.9 L1342.9 253.8 L1338.5 252.8 L1334.0 251.8 L1329.5 251.0 L1325.0 250.2 L1320.4 249.5 L1315.8 248.9 L1311.1 248.3 L1306.5 247.9 L1301.8 247.5 L1297.1 247.2 L1292.4 246.9 L1287.7 246.8 L1283.0 246.7 L1278.2 246.7 L1273.5 246.7 L1268.8 246.9 L1264.1 247.1 L1259.4 247.4 L1254.7 247.8 L1250.1 248.3 L1245.5 248.8 L1240.8 249.4 L1236.3 250.1 L1231.7 250.9 L1227.2 251.8 L1222.7 252.7 L1218.3 253.7 L1213.9 254.8 L1209.6 255.9 L1205.3 257.1 L1201.1 258.4 L1197.0 259.8 L1192.9 261.3 L1188.9 262.8 L1184.9 264.4 L1181.1 266.1 L1177.3 267.8 L1173.6 269.6 L1170.0 271.5 L1166.5 273.5 L1163.1 275.5 L1159.8 277.6 L1156.6 279.7 L1153.5 282.0 L1150.5 284.3 L1147.7 286.6 L1145.0 289.0 L1142.4 291.5 L1140.0 294.0 L1137.6 296.6 L1135.5 299.2 L1133.5 301.9 L1131.6 304.7 L1129.9 307.5 L1128.4 310.3 L1127.0 313.2 L1125.8 316.1 L1124.8 319.1 L1123.9 322.0 L1123.3 325.1 L1122.8 328.1 L1122.5 331.2 L1122.4 334.3 L1122.6 337.4 L1122.9 340.5 L1123.4 343.7 L1124.1 346.8 L1125.1 349.9 L1126.2 353.1 L1127.6 356.2 L1129.2 359.3 L1131.0 362.4 L1133.0 365.5 L1135.2 368.6 L1137.7 371.6 L1140.3 374.6 L1143.2 377.5 L1146.3 380.4 L1149.6 383.2 L1153.2 386.0 L1156.9 388.7 L1160.8 391.3 L1165.0 393.9 L1169.3 396.4 L1173.8 398.8 L1178.5 401.1 L1183.4 403.3 L1188.4 405.4 L1193.7 407.4 L1199.0 409.3 L1204.5 411.1 L1210.2 412.7 L1216.0 414.2 L1221.9 415.6 L1227.9 416.9 L1234.0 418.1 L1240.2 419.1 L1246.5 419.9 L1252.9 420.6 L1259.2 421.2 L1265.7 421.6 L1272.1 421.9 L1278.6 422.1 L1285.1 422.1 L1291.6 421.9 L1298.0 421.6 L1304.5 421.2 L1310.8 420.6 L1317.2 419.8 L1323.4 419.0 L1329.6 417.9 L1335.7 416.8 L1341.7 415.5 L1347.5 414.1 L1353.3 412.6 L1358.9 410.9 L1364.4 409.1 L1369.7 407.2 L1374.9 405.2 L1379.9 403.1 L1384.7 400.9 L1389.3 398.6 L1393.8 396.2 L1398.1 393.7 L1402.1 391.2 L1406.0 388.5 L1409.7 385.8 L1413.1 383.0 L1416.4 380.2 L1419.4 377.3 L1422.2 374.4 L1424.9 371.4 L1427.2 368.4 L1429.4 365.4 L1431.4 362.3 L1433.1 359.2 L1434.6 356.1 L1436.0 353.0 L1437.1 349.8 L1437.9 346.7 L1438.6 343.6 L1439.1 340.5 L1439.4 337.3 L1439.4 334.2 L1439.3 331.2 L1439.0 328.1 L1438.5 325.1 L1437.8 322.0 L1436.9 319.1 L1435.8 316.1Z" fill="none" stroke="#000" stroke-width="1.8"/>
<path d="M1344.3 319.0 L1344.0 317.8 L1343.7 316.6 L1343.2 315.4 L1342.7 314.2 L1342.1 313.1 L1341.4 311.9 L1340.7 310.8 L1339.9 309.7 L1339.0 308.6 L1338.1 307.5 L1337.1 306.5 L1336.0 305.5 L1334.9 304.5 L1333.7 303.5 L1332.5 302.5 L1331.2 301.6 L1329.9 300.7 L1328.5 299.8 L1327.0 298.9 L1325.5 298.1 L1324.0 297.3 L1322.4 296.5 L1320.7 295.8 L1319.1 295.1 L1317.4 294.4 L1315.6 293.8 L1313.8 293.1 L1312.0 292.6 L1310.1 292.0 L1308.3 291.5 L1306.4 291.0 L1304.4 290.6 L1302.5 290.2 L1300.5 289.8 L1298.5 289.5 L1296.5 289.2 L1294.4 288.9 L1292.4 288.7 L1290.3 288.5 L1288.3 288.4 L1286.2 288.3 L1284.1 288.2 L1282.0 288.1 L1279.9 288.1 L1277.9 288.2 L1275.8 288.3 L1273.7 288.4 L1271.6 288.5 L1269.6 288.7 L1267.5 288.9 L1265.5 289.2 L1263.5 289.5 L1261.5 289.8 L1259.5 290.2 L1257.6 290.6 L1255.6 291.0 L1253.7 291.5 L1251.9 292.0 L1250.0 292.5 L1248.2 293.1 L1246.4 293.7 L1244.7 294.4 L1243.0 295.1 L1241.3 295.8 L1239.7 296.5 L1238.1 297.3 L1236.5 298.1 L1235.1 298.9 L1233.6 299.8 L1232.2 300.6 L1230.9 301.5 L1229.6 302.5 L1228.4 303.4 L1227.2 304.4 L1226.1 305.4 L1225.1 306.5 L1224.1 307.5 L1223.2 308.6 L1222.3 309.7 L1221.5 310.8 L1220.8 311.9 L1220.2 313.1 L1219.6 314.2 L1219.1 315.4 L1218.6 316.6 L1218.3 317.7 L1218.0 318.9 L1217.8 320.2 L1217.6 321.4 L1217.6 322.6 L1217.6 323.8 L1217.7 325.0 L1217.9 326.2 L1218.1 327.5 L1218.5 328.7 L1218.9 329.9 L1219.4 331.1 L1220.0 332.3 L1220.6 333.5 L1221.4 334.7 L1222.2 335.8 L1223.1 337.0 L1224.0 338.1 L1225.1 339.2 L1226.2 340.4 L1227.4 341.4 L1228.6 342.5 L1230.0 343.5 L1231.4 344.5 L1232.8 345.5 L1234.4 346.5 L1236.0 347.4 L1237.6 348.3 L1239.4 349.1 L1241.2 350.0 L1243.0 350.8 L1244.9 351.5 L1246.9 352.2 L1248.9 352.9 L1250.9 353.6 L1253.0 354.2 L1255.1 354.7 L1257.3 355.2 L1259.5 355.7 L1261.7 356.1 L1264.0 356.5 L1266.3 356.8 L1268.6 357.1 L1270.9 357.3 L1273.2 357.5 L1275.6 357.7 L1277.9 357.8 L1280.3 357.8 L1282.7 357.8 L1285.0 357.8 L1287.4 357.7 L1289.8 357.5 L1292.1 357.3 L1294.4 357.1 L1296.7 356.8 L1299.0 356.5 L1301.2 356.1 L1303.5 355.7 L1305.7 355.2 L1307.8 354.7 L1309.9 354.1 L1312.0 353.5 L1314.0 352.9 L1316.0 352.2 L1318.0 351.5 L1319.8 350.7 L1321.7 349.9 L1323.4 349.1 L1325.2 348.3 L1326.8 347.4 L1328.4 346.4 L1329.9 345.5 L1331.4 344.5 L1332.8 343.5 L1334.1 342.5 L1335.3 341.4 L1336.5 340.3 L1337.6 339.2 L1338.6 338.1 L1339.6 337.0 L1340.4 335.8 L1341.2 334.7 L1341.9 333.5 L1342.6 332.3 L1343.1 331.1 L1343.6 329.9 L1344.0 328.7 L1344.3 327.5 L1344.5 326.2 L1344.7 325.0 L1344.8 323.8 L1344.8 322.6 L1344.7 321.4 L1344.6 320.2 L1344.3 319.0Z" fill="none" stroke="#000" stroke-width="1.8"/>
<path d="M1371.3 176.4 L1398.3 176.0 M1371.3 176.4 L1366.6 238.8 M1398.3 176.0 L1392.7 238.0 M1366.6 238.8 L1392.7 238.0 M1371.3 176.4 L1395.6 244.6 M1398.3 176.0 L1428.1 244.1 M1395.6 244.6 L1428.1 244.1 M1366.6 238.8 L1389.9 313.3 M1392.7 238.0 L1419.2 312.5 M1395.6 244.6 L1389.9 313.3 M1428.1 244.1 L1419.2 312.5 M1389.9 313.3 L1419.2 312.5 " fill="none" stroke="#000" stroke-width="2.5" stroke-linecap="round" stroke-linejoin="round"/>
<path d="M946.4 479.5 V512.3 H982" fill="none" stroke="#5d5e62" stroke-width="1"/><path d="M946.4 512.3 L943.4 494" stroke="#5d5e62" stroke-width="0.8"/>
</svg>
<div class="t" style="left:948.60px;top:470.38px;font-size:15.5px;color:#5d5e62;">z</div>
<div class="t" style="left:946.30px;top:477.88px;font-size:15.5px;color:#5d5e62;">y</div>
<div class="t" style="left:985.00px;top:500.48px;font-size:15.5px;color:#5d5e62;">x</div>
<div class="a" style="left:902px;top:175px;width:114.2px;height:23px;background:#6ba3ff;clip-path:polygon(0 0,100% 0,100% 20.4px,111.60000000000001px 100%,0 100%)"></div>
<div class="t" style="left:912.50px;top:178.84px;font-size:14.6px;color:#262220;font-weight:bold;transform:scaleX(0.9683);">Perspective</div>
<div class="a" style="left:1002.3px;top:177px;width:1.1px;height:19.8px;background:#2a2a30"></div>
<svg style="left:1003.9px;top:183.1px" width="10" height="6"><path d="M0 0 H9.2 L4.6 4.8Z" fill="#2c2c30"/></svg>
<div class="a" style="left:139.3px;top:942px;width:1518.7px;height:28px;background:#dbdce0;"></div>
<div class="a" style="left:197.5px;top:943.8px;width:92px;height:25.5px;background:#e9eaee;border-radius:3px 3px 6px 6px;border:1px solid #ccd2e8;border-top-color:#e2e4ec"></div>
<div class="t" style="left:157.20px;top:949.54px;font-size:14.6px;color:#6a6b75;transform:scaleX(1.0681);">Top</div>
<div class="t" style="left:204.80px;top:949.54px;font-size:14.6px;color:#1f2030;transform:scaleX(0.9666);">Perspective</div>
<div class="t" style="left:301.20px;top:949.54px;font-size:14.6px;color:#6a6b75;transform:scaleX(1.0139);">Front</div>
<div class="t" style="left:356.30px;top:949.54px;font-size:14.6px;color:#6a6b75;transform:scaleX(1.0432);">Right</div>
<svg style="left:415px;top:952px" width="12" height="12"><path d="M4.1 0.6 H6.9 V4.1 H10.4 V6.9 H6.9 V10.4 H4.1 V6.9 H0.6 V4.1 H4.1Z" fill="#e9eaee" stroke="#77787f" stroke-width="1"/></svg>
<div class="a" style="left:1658px;top:172px;width:248px;height:798px;background:#e9eaee;border-radius:6px 0 0 0"></div>
<div class="t" style="left:1659.40px;top:176.54px;font-size:14.6px;color:#6a6b75;transform:scaleX(0.9231);">Layers</div>
<svg style="left:0;top:0" width="1" height="1"><path d="M1901.96 183.25 L1901.96 185.95 L1900.11 186.09 L1899.75 186.95 L1900.97 188.36 L1899.06 190.27 L1897.65 189.05 L1896.79 189.41 L1896.65 191.26 L1893.95 191.26 L1893.81 189.41 L1892.95 189.05 L1891.54 190.27 L1889.63 188.36 L1890.85 186.95 L1890.49 186.09 L1888.64 185.95 L1888.64 183.25 L1890.49 183.11 L1890.85 182.25 L1889.63 180.84 L1891.54 178.93 L1892.95 180.15 L1893.81 179.79 L1893.95 177.94 L1896.65 177.94 L1896.79 179.79 L1897.65 180.15 L1899.06 178.93 L1900.97 180.84 L1899.75 182.25 L1900.11 183.11Z M1897.75 184.60 A2.45 2.45 0 1 0 1892.85 184.60 A2.45 2.45 0 1 0 1897.75 184.60Z" fill="#c6c7cc" fill-rule="evenodd"/></svg>
<div class="a" style="left:1658px;top:195.5px;width:248px;height:1px;background:#e2e3e8;"></div>
<div class="a" style="left:1883px;top:240.5px;width:23px;height:729.5px;background:#d9dadf;border-radius:6px 0 0 0"></div>
<div class="a" style="left:1658.6px;top:266.1px;width:219.2px;height:26.8px;background:#fff;border:1px solid #bcc5e0;border-radius:13.4px"></div>
<svg style="left:1659.4px;top:268.6px" width="24" height="24"><circle cx="10.8" cy="10.2" r="4.7" fill="none" stroke="#2c2c34" stroke-width="1.4"/><path d="M14.2 13.8 L18.6 18.4" stroke="#2c2c34" stroke-width="1.6"/></svg>
<div class="t" style="left:1681.20px;top:273.24px;font-size:14.6px;color:#7b7c86;transform:scaleX(0.9341);">Search</div>
<div class="a" style="left:1658px;top:301px;width:220px;height:669px;background:#fff;"></div>
<div class="a" style="left:1658px;top:329px;width:220px;height:1px;background:#e0e2ea;"></div>
<div class="a" style="left:1757.4px;top:301px;width:1px;height:28px;background:#dfe2ec;"></div>
<div class="a" style="left:1782.4px;top:301px;width:1px;height:28px;background:#dfe2ec;"></div>
<div class="a" style="left:1807.3px;top:301px;width:1px;height:28px;background:#dfe2ec;"></div>
<div class="a" style="left:1832.3px;top:301px;width:1px;height:28px;background:#dfe2ec;"></div>
<div class="a" style="left:1857.2px;top:301px;width:1px;height:28px;background:#dfe2ec;"></div>
<div class="t" style="left:1664.00px;top:308.84px;font-size:14.6px;color:#2c2d38;transform:scaleX(0.9315);">Layer</div>
<div class="a" style="left:1860px;top:300px;width:18px;height:29px;overflow:hidden"><div class="t" style="left:4.40px;top:8.84px;font-size:14.6px;color:#2c2d38;">M</div></div>
<div class="t" style="left:1679.20px;top:335.04px;font-size:14.6px;color:#16161c;font-weight:bold;transform:scaleX(1.0303);">Default</div>
<svg style="left:1758px;top:330px" width="122" height="26"><path d="M4.2 12.2 L8.8 16.6 L20.8 6" fill="none" stroke="#222" stroke-width="2"/><rect x="78.8" y="2.4" width="17.6" height="16.8" fill="#000"/><defs><radialGradient id="gMat" cx="0.4" cy="0.35" r="0.7"><stop offset="0" stop-color="#fff"/><stop offset="1" stop-color="#d4d4d4"/></radialGradient></defs><circle cx="110.5" cy="11.2" r="7.6" fill="url(#gMat)" stroke="#111" stroke-width="1.2"/></svg>
<div class="a" style="left:1658px;top:353px;width:220px;height:1px;background:repeating-linear-gradient(90deg,#cfcfd4 0 1px,#fff 1px 2px)"></div>
<div class="a" style="left:1667px;top:955.2px;width:58px;height:9.6px;background:#c1c1c1;border-radius:5px"></div>
<svg style="left:0;top:0" width="1906" height="400">
<circle cx="1675.6" cy="221.6" r="4.6" fill="#fff" opacity="0.7"/>
<path d="M1663.3 209.8 L1677.9 212.8 L1677.9 220.2 L1669.3 224.8 L1663.3 217.2Z" fill="#fff" stroke="#000" stroke-width="1.3" stroke-linejoin="round"/><path d="M1663.3 209.8 L1677.9 212.8 L1669.3 217.6Z" fill="#ff8b5e"/><path d="M1663.3 209.8 L1669.3 217.6 L1669.3 220.0 L1663.3 212.2Z" fill="#ff5a1e"/><path d="M1669.3 217.6 L1677.9 212.8 L1677.9 215.2 L1669.3 220.0Z" fill="#dc0a0a"/><path d="M1669.3 220.0 L1677.9 215.2 L1677.9 217.6 L1669.3 222.4Z" fill="#c8c8c8"/><path d="M1663.3 214.6 L1669.3 222.4 L1669.3 224.8 L1663.3 217.2Z" fill="#5a7af0"/><path d="M1669.3 222.4 L1677.9 217.6 L1677.9 220.2 L1669.3 224.8Z" fill="#182c8c"/><path d="M1663.3 209.8 L1677.9 212.8 L1677.9 220.2 L1669.3 224.8 L1663.3 217.2Z" fill="none" stroke="#000" stroke-width="1.3" stroke-linejoin="round"/>
<circle cx="1675.7" cy="221.7" r="4.4" fill="#fff" opacity="0.75"/>
<path d="M1674.5 218.2 h2.5 v2.4 h2.5 v2.4 h-2.5 v2.5 h-2.5 v-2.5 h-2.5 v-2.4 h2.5Z" fill="#000"/>
<path d="M1690.6 208.8 L1699.4 210.6 V215.4 Q1698.6 218.4 1695 219 Q1691.6 216.8 1690.6 213.4Z" fill="#dadbde" stroke="#b4b4b8" stroke-width="1.1" stroke-linejoin="round"/><path d="M1698.6 216.2 L1707.4 218 V221.4 Q1706.4 224.6 1702.6 225.4 Q1699.6 223.4 1698.6 220.4Z" fill="#dadbde" stroke="#b4b4b8" stroke-width="1.1" stroke-linejoin="round"/><path d="M1692.2 219.4 V223.8 H1696.4" fill="none" stroke="#b4b4b8" stroke-width="1.1"/><path d="M1695.6 222 L1698 223.8 L1695.6 225.6Z" fill="#b4b4b8"/>
<path d="M1719.4 208.4 L1726.1 215 L1732.8 208.4 L1734.6 210.2 L1727.9 216.9 L1734.6 223.6 L1732.8 225.4 L1726.1 218.8 L1719.4 225.4 L1717.6 223.6 L1724.3 216.9 L1717.6 210.2Z" fill="#dadbde" stroke="#b4b4b8" stroke-width="1"/>
<path d="M1752.6 225 Q1744.4 223 1744.6 216 Q1745 209 1751.4 208.6 Q1755 208.6 1757 211.4" fill="none" stroke="#b4b4b8" stroke-width="1.2"/><path d="M1755.2 209.2 L1757.8 212.6 L1753.8 212.6Z" fill="#b4b4b8"/><path d="M1748.8 212.8 L1761.8 215.6 V219.4 Q1760.8 224 1754.8 225.6 Q1750 222.8 1748.8 217.6Z" fill="#dadbde" stroke="#b4b4b8" stroke-width="1.1" stroke-linejoin="round"/>
<path d="M1773.2 220.2 L1780.9 211 L1788.7 220.2Z" fill="#dadbde" stroke="#b4b4b8" stroke-width="1.2" stroke-linejoin="round"/>
<path d="M1801.2 212.6 L1809 221.7 L1816.8 212.6Z" fill="#dadbde" stroke="#b4b4b8" stroke-width="1.2" stroke-linejoin="round"/>
<path d="M1840.4 208.9 L1830.8 217 L1840.4 225.2Z" fill="#dadbde" stroke="#b4b4b8" stroke-width="1.2" stroke-linejoin="round"/>
<defs><linearGradient id="gFil" x1="0" y1="0" x2="1" y2="0"><stop offset="0" stop-color="#9cb2ff"/><stop offset="0.45" stop-color="#3a5cf0"/><stop offset="0.7" stop-color="#2a3ea8"/><stop offset="1" stop-color="#7a94f4"/></linearGradient></defs><path d="M1855.4 209.6 Q1863 207.2 1870.6 209.6 L1865.3 217.4 V224.4 Q1863 226.2 1860.9 224.4 V217.4Z" fill="url(#gFil)" stroke="#0c1a50" stroke-width="1.3" stroke-linejoin="round"/>
<path d="M1887.3 211.0 L1901.9 214.0 L1901.9 221.4 L1893.3 226.0 L1887.3 218.4Z" fill="#fff" stroke="#000" stroke-width="1.3" stroke-linejoin="round"/><path d="M1887.3 211.0 L1901.9 214.0 L1893.3 218.8Z" fill="#ff8b5e"/><path d="M1887.3 211.0 L1893.3 218.8 L1893.3 221.2 L1887.3 213.4Z" fill="#ff5a1e"/><path d="M1893.3 218.8 L1901.9 214.0 L1901.9 216.4 L1893.3 221.2Z" fill="#dc0a0a"/><path d="M1893.3 221.2 L1901.9 216.4 L1901.9 218.8 L1893.3 223.6Z" fill="#c8c8c8"/><path d="M1887.3 215.8 L1893.3 223.6 L1893.3 226.0 L1887.3 218.4Z" fill="#5a7af0"/><path d="M1893.3 223.6 L1901.9 218.8 L1901.9 221.4 L1893.3 226.0Z" fill="#182c8c"/><path d="M1887.3 211.0 L1901.9 214.0 L1901.9 221.4 L1893.3 226.0 L1887.3 218.4Z" fill="none" stroke="#000" stroke-width="1.3" stroke-linejoin="round"/>
<rect x="1663.6" y="236.4" width="14" height="17.2" fill="#f2f2f2" stroke="#444" stroke-width="0.9"/><rect x="1663.6" y="236.4" width="14" height="2.4" fill="#555"/>
<path d="M1668.3 236.4 V253.6 M1673 236.4 V253.6 M1663.6 243.6 H1677.6 M1663.6 248.6 H1677.6 M1663.6 238.8 H1677.6" stroke="#444" stroke-width="0.9" fill="none"/>
<path d="M1692.6 238.7 H1705.6 M1692.6 245 H1705.6 M1692.6 251.3 H1705.6" stroke="#000" stroke-width="2.4" stroke-linecap="round"/>
<circle cx="1726.1" cy="245" r="9.2" fill="url(#gHelp)"/>
<path d="M1894.9 263.0 L1894.90 255.00 A8.0 8.0 0 0 1 1896.49 255.16Z" fill="hsl(0,100%,50%)"/><path d="M1894.9 263.0 L1896.29 255.12 A8.0 8.0 0 0 1 1897.83 255.56Z" fill="hsl(10,100%,50%)"/><path d="M1894.9 263.0 L1897.64 255.48 A8.0 8.0 0 0 1 1899.08 256.18Z" fill="hsl(20,100%,50%)"/><path d="M1894.9 263.0 L1898.90 256.07 A8.0 8.0 0 0 1 1900.20 257.01Z" fill="hsl(30,100%,50%)"/><path d="M1894.9 263.0 L1900.04 256.87 A8.0 8.0 0 0 1 1901.16 258.02Z" fill="hsl(40,100%,50%)"/><path d="M1894.9 263.0 L1901.03 257.86 A8.0 8.0 0 0 1 1901.93 259.18Z" fill="hsl(50,100%,50%)"/><path d="M1894.9 263.0 L1901.83 259.00 A8.0 8.0 0 0 1 1902.49 260.46Z" fill="hsl(60,100%,50%)"/><path d="M1894.9 263.0 L1902.42 260.26 A8.0 8.0 0 0 1 1902.81 261.82Z" fill="hsl(70,100%,50%)"/><path d="M1894.9 263.0 L1902.78 261.61 A8.0 8.0 0 0 1 1902.90 263.21Z" fill="hsl(80,100%,50%)"/><path d="M1894.9 263.0 L1902.90 263.00 A8.0 8.0 0 0 1 1902.74 264.59Z" fill="hsl(90,100%,50%)"/><path d="M1894.9 263.0 L1902.78 264.39 A8.0 8.0 0 0 1 1902.34 265.93Z" fill="hsl(100,100%,50%)"/><path d="M1894.9 263.0 L1902.42 265.74 A8.0 8.0 0 0 1 1901.72 267.18Z" fill="hsl(110,100%,50%)"/><path d="M1894.9 263.0 L1901.83 267.00 A8.0 8.0 0 0 1 1900.89 268.30Z" fill="hsl(120,100%,50%)"/><path d="M1894.9 263.0 L1901.03 268.14 A8.0 8.0 0 0 1 1899.88 269.26Z" fill="hsl(130,100%,50%)"/><path d="M1894.9 263.0 L1900.04 269.13 A8.0 8.0 0 0 1 1898.72 270.03Z" fill="hsl(140,100%,50%)"/><path d="M1894.9 263.0 L1898.90 269.93 A8.0 8.0 0 0 1 1897.44 270.59Z" fill="hsl(150,100%,50%)"/><path d="M1894.9 263.0 L1897.64 270.52 A8.0 8.0 0 0 1 1896.08 270.91Z" fill="hsl(160,100%,50%)"/><path d="M1894.9 263.0 L1896.29 270.88 A8.0 8.0 0 0 1 1894.69 271.00Z" fill="hsl(170,100%,50%)"/><path d="M1894.9 263.0 L1894.90 271.00 A8.0 8.0 0 0 1 1893.31 270.84Z" fill="hsl(180,100%,50%)"/><path d="M1894.9 263.0 L1893.51 270.88 A8.0 8.0 0 0 1 1891.97 270.44Z" fill="hsl(190,100%,50%)"/><path d="M1894.9 263.0 L1892.16 270.52 A8.0 8.0 0 0 1 1890.72 269.82Z" fill="hsl(200,100%,50%)"/><path d="M1894.9 263.0 L1890.90 269.93 A8.0 8.0 0 0 1 1889.60 268.99Z" fill="hsl(210,100%,50%)"/><path d="M1894.9 263.0 L1889.76 269.13 A8.0 8.0 0 0 1 1888.64 267.98Z" fill="hsl(220,100%,50%)"/><path d="M1894.9 263.0 L1888.77 268.14 A8.0 8.0 0 0 1 1887.87 266.82Z" fill="hsl(230,100%,50%)"/><path d="M1894.9 263.0 L1887.97 267.00 A8.0 8.0 0 0 1 1887.31 265.54Z" fill="hsl(240,100%,50%)"/><path d="M1894.9 263.0 L1887.38 265.74 A8.0 8.0 0 0 1 1886.99 264.18Z" fill="hsl(250,100%,50%)"/><path d="M1894.9 263.0 L1887.02 264.39 A8.0 8.0 0 0 1 1886.90 262.79Z" fill="hsl(260,100%,50%)"/><path d="M1894.9 263.0 L1886.90 263.00 A8.0 8.0 0 0 1 1887.06 261.41Z" fill="hsl(270,100%,50%)"/><path d="M1894.9 263.0 L1887.02 261.61 A8.0 8.0 0 0 1 1887.46 260.07Z" fill="hsl(280,100%,50%)"/><path d="M1894.9 263.0 L1887.38 260.26 A8.0 8.0 0 0 1 1888.08 258.82Z" fill="hsl(290,100%,50%)"/><path d="M1894.9 263.0 L1887.97 259.00 A8.0 8.0 0 0 1 1888.91 257.70Z" fill="hsl(300,100%,50%)"/><path d="M1894.9 263.0 L1888.77 257.86 A8.0 8.0 0 0 1 1889.92 256.74Z" fill="hsl(310,100%,50%)"/><path d="M1894.9 263.0 L1889.76 256.87 A8.0 8.0 0 0 1 1891.08 255.97Z" fill="hsl(320,100%,50%)"/><path d="M1894.9 263.0 L1890.90 256.07 A8.0 8.0 0 0 1 1892.36 255.41Z" fill="hsl(330,100%,50%)"/><path d="M1894.9 263.0 L1892.16 255.48 A8.0 8.0 0 0 1 1893.72 255.09Z" fill="hsl(340,100%,50%)"/><path d="M1894.9 263.0 L1893.51 255.12 A8.0 8.0 0 0 1 1895.11 255.00Z" fill="hsl(350,100%,50%)"/><circle cx="1894.9" cy="263.0" r="4.5" fill="#fff"/><circle cx="1894.9" cy="263.0" r="8.0" fill="none" stroke="#000" stroke-width="1.4"/>
<defs><linearGradient id="gMon" x1="0" y1="0" x2="0.3" y2="1"><stop offset="0" stop-color="#e6e6e6"/><stop offset="1" stop-color="#9c9c9c"/></linearGradient></defs><rect x="1887.1" y="300" width="15.8" height="12.6" fill="url(#gMon)" stroke="#000" stroke-width="2.1"/><path d="M1892 313.6 H1898.2 L1899.4 316.6 H1890.8Z" fill="#000"/>
<rect x="1886.6" y="344.7" width="17" height="16.4" fill="#fff" stroke="#333" stroke-width="0.9"/><rect x="1886.6" y="344.7" width="17" height="2.3" fill="#2636a0"/><path d="M1888.2 358.6 V355.6 A6.9 6.9 0 0 1 1902 355.6 V358.6Z" fill="url(#gHelp)"/>
</svg>
<div class="t" style="left:1720.6px;top:234.6px;font-family:'Liberation Serif',serif;font-weight:bold;font-size:22px;color:#fff;transform:scaleX(0.95)">?</div>
<div class="t" style="left:1892.1px;top:347.6px;font-family:'Liberation Serif',serif;font-weight:bold;font-size:13px;color:#fff">?</div>
<div class="a" style="left:0px;top:970px;width:1906px;height:24px;background:#e9eaee;"></div>
<div class="a" style="left:1018.4px;top:971.4px;width:63.1px;height:22.6px;background:#ccd3ea;border-radius:4px 4px 0 0"></div>
<div class="a" style="left:1084.9px;top:971.4px;width:98.1px;height:22.6px;background:#ccd3ea;border-radius:4px 4px 0 0"></div>
<svg style="left:0;top:970px" width="1906" height="24"><rect x="-3" y="5.2" width="19.8" height="16.6" fill="#474747"/><rect x="5.6" y="7.4" width="8.8" height="12.2" fill="#e9eaee"/><rect x="1883.9" y="5.2" width="16.8" height="16.6" fill="#474747"/><rect x="1886.2" y="7.4" width="8.8" height="12.2" fill="#e9eaee"/><rect x="561.5" y="4.4" width="19.4" height="18.4" fill="#000"/><path d="M1341.8 11.6 V8.8 A3.2 3.2 0 0 1 1348.2 8.8 V11.6" fill="none" stroke="#b4b4b4" stroke-width="1.3"/><rect x="1339.6" y="11.4" width="10.8" height="8.6" rx="1" fill="#f4f4f4" stroke="#b4b4b4" stroke-width="1.2"/></svg>
<div class="t" style="left:43.70px;top:977.34px;font-size:14.6px;color:#3d3e49;transform:scaleX(0.9316);">CPlane</div>
<div class="t" style="left:142.70px;top:977.34px;font-size:14.6px;color:#3d3e49;transform:scaleX(0.9608);">x 8.619</div>
<div class="t" style="left:242.40px;top:977.34px;font-size:14.6px;color:#3d3e49;">y -11.347</div>
<div class="t" style="left:370.40px;top:977.34px;font-size:14.6px;color:#3d3e49;transform:scaleX(0.9282);">z 0</div>
<div class="t" style="left:458.00px;top:977.34px;font-size:14.6px;color:#3d3e49;transform:scaleX(1.0308);">Millimeters</div>
<div class="t" style="left:589.70px;top:977.34px;font-size:14.6px;color:#3d3e49;transform:scaleX(1.0162);">Default</div>
<div class="t" style="left:809.50px;top:977.34px;font-size:14.6px;color:#3d3e49;transform:scaleX(0.9810);">Grid Snap</div>
<div class="t" style="left:899.50px;top:977.34px;font-size:14.6px;color:#3d3e49;transform:scaleX(1.0411);">Ortho</div>
<div class="t" style="left:963.30px;top:977.34px;font-size:14.6px;color:#3d3e49;transform:scaleX(0.9538);">Planar</div>
<div class="t" style="left:1028.50px;top:977.34px;font-size:14.6px;color:#1c1d28;font-weight:bold;transform:scaleX(0.9609);">Osnap</div>
<div class="t" style="left:1095.00px;top:977.34px;font-size:14.6px;color:#1c1d28;font-weight:bold;">SmartTrack</div>
<div class="t" style="left:1201.80px;top:977.34px;font-size:14.6px;color:#3d3e49;transform:scaleX(0.9724);">Gumball (CPlane)</div>
<div class="t" style="left:1364.40px;top:977.34px;font-size:14.6px;color:#3d3e49;transform:scaleX(0.9978);">Auto CPlane (Object)</div>
<div class="t" style="left:1533.30px;top:977.34px;font-size:14.6px;color:#3d3e49;transform:scaleX(0.9977);">Record History</div>
<div class="t" style="left:1658.20px;top:977.34px;font-size:14.6px;color:#3d3e49;transform:scaleX(0.9815);">Filter</div>
<div class="a" style="left:1715px;top:970px;width:123px;height:24px;overflow:hidden"><div class="t" style="left:3.90px;top:7.34px;font-size:14.6px;color:#3d3e49;transform:scaleX(1.0069);">Memory use: 1011</div></div>
</body></html>
